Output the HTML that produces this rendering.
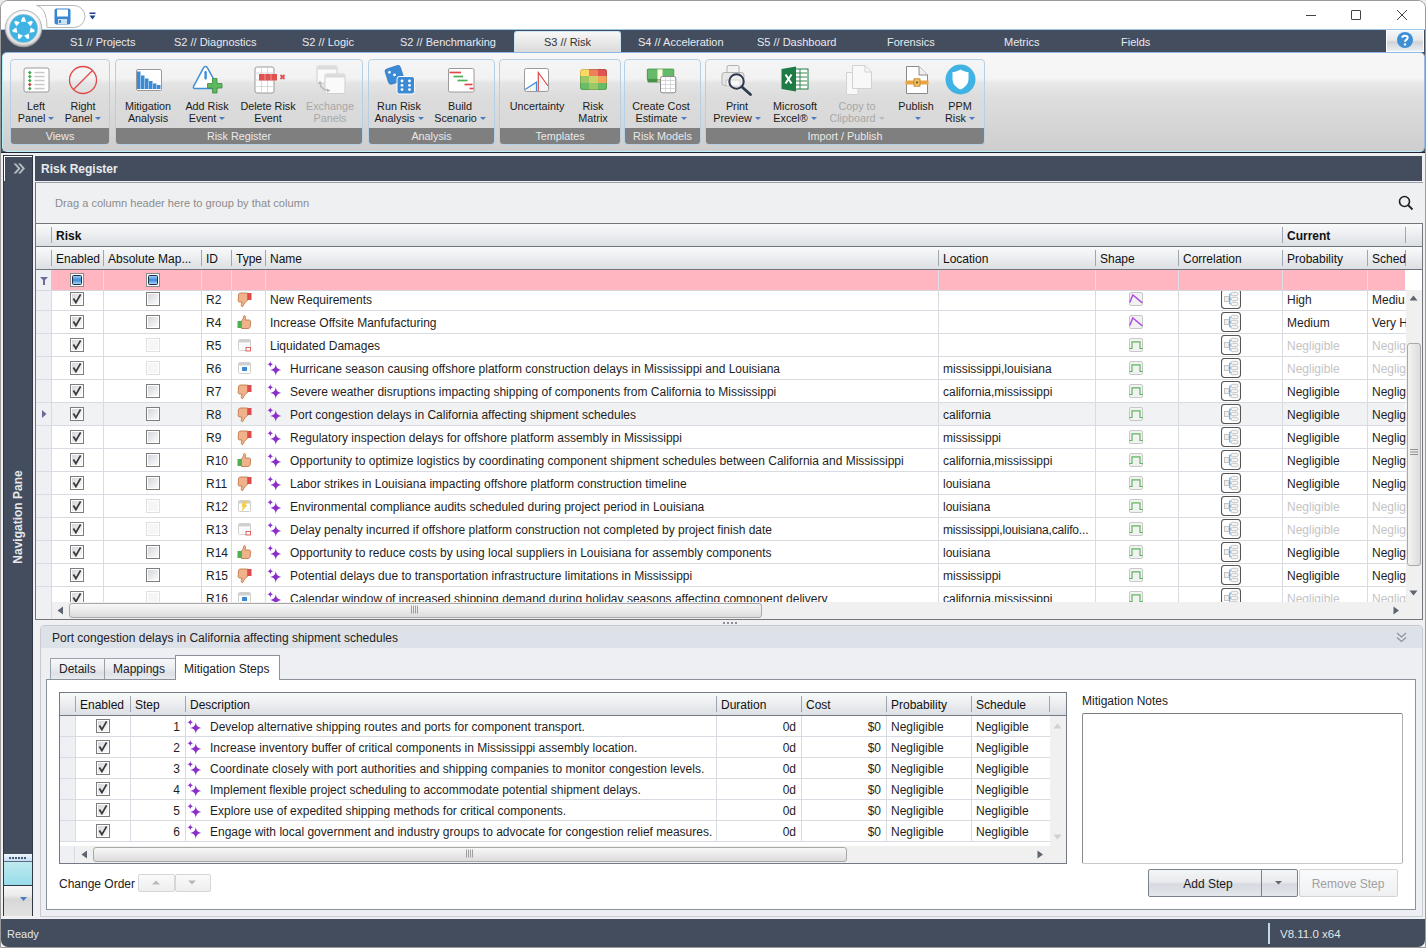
<!DOCTYPE html><html><head><meta charset="utf-8"><style>
html,body{margin:0;padding:0}
body{width:1426px;height:948px;position:relative;overflow:hidden;background:#e9eaee;font-family:"Liberation Sans", sans-serif;font-size:12px;color:#1e1e1e}
div,svg{box-sizing:border-box}
</style></head><body>
<div style="position:absolute;left:0px;top:0px;width:1426px;height:948px;background:#f0f0f2;border:1px solid #9a9a9a;border-radius:8px 8px 0 0"></div>
<div style="position:absolute;left:1px;top:1px;width:1424px;height:28px;background:#ffffff;border-radius:7px 7px 0 0"></div>
<svg style="position:absolute;left:34px;top:4px;" width="54" height="25" viewBox="0 0 54 25"><path d="M2.5 1.5 H40 A11 11 0 0 1 40 23.5 H13 C13 10 9 3 2.5 1.5 Z" fill="#fff" stroke="#b8b8b8" stroke-width="1"/></svg>
<svg style="position:absolute;left:54px;top:8px;" width="17" height="17" viewBox="0 0 17 17"><rect x="0.5" y="0.5" width="16" height="16" rx="2" fill="#3a87d0"/><rect x="3" y="1.5" width="11" height="7" fill="#fff"/><rect x="4" y="11" width="9" height="5" fill="#cfe2f5"/><rect x="5" y="12" width="2" height="3" fill="#3a87d0"/></svg>
<svg style="position:absolute;left:89px;top:12px;" width="8" height="9" viewBox="0 0 8 9"><rect x="0.5" y="0.5" width="6" height="1.5" fill="#1d3f8f"/><path d="M0.5 3.5 H6.5 L3.5 7.5 Z" fill="#1d3f8f"/></svg>
<div style="position:absolute;left:1306px;top:15px;width:10px;height:1px;background:#444"></div>
<div style="position:absolute;left:1351px;top:10px;width:10px;height:10px;border:1px solid #444;border-radius:1px"></div>
<svg style="position:absolute;left:1396px;top:9px;" width="12" height="12" viewBox="0 0 12 12"><path d="M1 1 L11 11 M11 1 L1 11" stroke="#444" stroke-width="1"/></svg>
<div style="position:absolute;left:1px;top:29px;width:1424px;height:23px;background:#434d5e;border-top:1px solid #9fc6e6"></div>
<div style="position:absolute;left:70px;top:35px;white-space:nowrap;font-size:11px;line-height:14px;color:#e8eaee">S1 // Projects</div>
<div style="position:absolute;left:174px;top:35px;white-space:nowrap;font-size:11px;line-height:14px;color:#e8eaee">S2 // Diagnostics</div>
<div style="position:absolute;left:302px;top:35px;white-space:nowrap;font-size:11px;line-height:14px;color:#e8eaee">S2 // Logic</div>
<div style="position:absolute;left:400px;top:35px;white-space:nowrap;font-size:11px;line-height:14px;color:#e8eaee">S2 // Benchmarking</div>
<div style="position:absolute;left:638px;top:35px;white-space:nowrap;font-size:11px;line-height:14px;color:#e8eaee">S4 // Acceleration</div>
<div style="position:absolute;left:757px;top:35px;white-space:nowrap;font-size:11px;line-height:14px;color:#e8eaee">S5 // Dashboard</div>
<div style="position:absolute;left:887px;top:35px;white-space:nowrap;font-size:11px;line-height:14px;color:#e8eaee">Forensics</div>
<div style="position:absolute;left:1004px;top:35px;white-space:nowrap;font-size:11px;line-height:14px;color:#e8eaee">Metrics</div>
<div style="position:absolute;left:1121px;top:35px;white-space:nowrap;font-size:11px;line-height:14px;color:#e8eaee">Fields</div>
<div style="position:absolute;left:514px;top:31px;width:107px;height:22px;background:linear-gradient(#f7f7f7,#d9d9d9);border:1px solid #c9e6f2;border-bottom:none;border-radius:3px 3px 0 0"></div>
<div style="position:absolute;left:544px;top:35px;white-space:nowrap;font-size:11px;line-height:14px;color:#333">S3 // Risk</div>
<div style="position:absolute;left:1386px;top:30px;width:38px;height:22px;background:linear-gradient(#f4f5f7 0%,#e7e9ec 45%,#cfd3d9 55%,#eceef0 100%);border:1px solid #fff"></div>
<svg style="position:absolute;left:1396px;top:31px;" width="18" height="18" viewBox="0 0 18 18"><circle cx="9" cy="9" r="8" fill="#3d8fd6"/><path d="M6.3 6.8 C6.3 4.2 11.7 4.2 11.7 6.8 C11.7 8.6 9 8.6 9 10.8" stroke="#fff" stroke-width="2" fill="none"/><circle cx="9" cy="13.4" r="1.2" fill="#fff"/></svg>
<svg style="position:absolute;left:3.5px;top:8.5px;" width="39" height="39" viewBox="0 0 39 39"><defs><radialGradient id="lg" cx="50%" cy="45%" r="55%"><stop offset="0.7" stop-color="#ffffff"/><stop offset="0.88" stop-color="#dcdcdc"/><stop offset="1" stop-color="#9c9c9c"/></radialGradient></defs>
<circle cx="19.5" cy="19.5" r="18.3" fill="url(#lg)" stroke="#a8a8a8" stroke-width="0.8"/>
<circle cx="19.5" cy="19.5" r="14.3" fill="#3fb3e3" stroke="#c8c8c8" stroke-width="0.6"/>
<g fill="#fff"><path d="M20.50 8.30 L22.20 12.70 L16.80 12.70 L18.50 8.30 Z"/><path d="M28.88 13.30 L26.50 17.37 L23.13 13.15 L27.63 11.74 Z"/><path d="M30.20 22.97 L25.53 23.65 L26.73 18.38 L30.64 21.02 Z"/><path d="M23.46 30.02 L20.02 26.80 L24.88 24.46 L25.26 29.16 Z"/><path d="M13.74 29.16 L14.12 24.46 L18.98 26.80 L15.54 30.02 Z"/><path d="M8.36 21.02 L12.27 18.38 L13.47 23.65 L8.80 22.97 Z"/><path d="M11.37 11.74 L15.87 13.15 L12.50 17.37 L10.12 13.30 Z"/></g></svg>
<div style="position:absolute;left:1px;top:52px;width:1424px;height:101px;background:#434d5e"></div>
<div style="position:absolute;left:1px;top:152px;width:1424px;height:1px;background:#1f2530"></div>
<div style="position:absolute;left:2px;top:52px;width:1423px;height:100px;background:linear-gradient(#f7f7f7 0%,#f5f5f5 26%,#e9e9e9 30%,#dedede 45%,#cecece 100%);border:1px solid #b6eef9;border-top-color:#8fb6e6;border-right-color:#9ab8e8;border-radius:5px"></div>
<div style="position:absolute;left:10px;top:59px;width:100px;height:86px;background:linear-gradient(#f5f5f5 0%,#f2f2f2 22%,#e4e4e4 28%,#dcdcdc 45%,#d6d6d6 100%);border:1px solid #b7cfe2;border-radius:4px"></div>
<div style="position:absolute;left:11px;top:128px;width:98px;height:16px;background:#7f7f7f;border-radius:0 0 3px 3px"></div>
<div style="position:absolute;left:10.0px;top:129px;width:100px;text-align:center;white-space:nowrap;font-size:10.8px;line-height:14px;color:#e9e9e9">Views</div>
<div style="position:absolute;left:115px;top:59px;width:248px;height:86px;background:linear-gradient(#f5f5f5 0%,#f2f2f2 22%,#e4e4e4 28%,#dcdcdc 45%,#d6d6d6 100%);border:1px solid #b7cfe2;border-radius:4px"></div>
<div style="position:absolute;left:116px;top:128px;width:246px;height:16px;background:#7f7f7f;border-radius:0 0 3px 3px"></div>
<div style="position:absolute;left:115.0px;top:129px;width:248px;text-align:center;white-space:nowrap;font-size:10.8px;line-height:14px;color:#e9e9e9">Risk Register</div>
<div style="position:absolute;left:368px;top:59px;width:127px;height:86px;background:linear-gradient(#f5f5f5 0%,#f2f2f2 22%,#e4e4e4 28%,#dcdcdc 45%,#d6d6d6 100%);border:1px solid #b7cfe2;border-radius:4px"></div>
<div style="position:absolute;left:369px;top:128px;width:125px;height:16px;background:#7f7f7f;border-radius:0 0 3px 3px"></div>
<div style="position:absolute;left:368.0px;top:129px;width:127px;text-align:center;white-space:nowrap;font-size:10.8px;line-height:14px;color:#e9e9e9">Analysis</div>
<div style="position:absolute;left:499px;top:59px;width:122px;height:86px;background:linear-gradient(#f5f5f5 0%,#f2f2f2 22%,#e4e4e4 28%,#dcdcdc 45%,#d6d6d6 100%);border:1px solid #b7cfe2;border-radius:4px"></div>
<div style="position:absolute;left:500px;top:128px;width:120px;height:16px;background:#7f7f7f;border-radius:0 0 3px 3px"></div>
<div style="position:absolute;left:499.0px;top:129px;width:122px;text-align:center;white-space:nowrap;font-size:10.8px;line-height:14px;color:#e9e9e9">Templates</div>
<div style="position:absolute;left:624px;top:59px;width:77px;height:86px;background:linear-gradient(#f5f5f5 0%,#f2f2f2 22%,#e4e4e4 28%,#dcdcdc 45%,#d6d6d6 100%);border:1px solid #b7cfe2;border-radius:4px"></div>
<div style="position:absolute;left:625px;top:128px;width:75px;height:16px;background:#7f7f7f;border-radius:0 0 3px 3px"></div>
<div style="position:absolute;left:624.0px;top:129px;width:77px;text-align:center;white-space:nowrap;font-size:10.8px;line-height:14px;color:#e9e9e9">Risk Models</div>
<div style="position:absolute;left:705px;top:59px;width:280px;height:86px;background:linear-gradient(#f5f5f5 0%,#f2f2f2 22%,#e4e4e4 28%,#dcdcdc 45%,#d6d6d6 100%);border:1px solid #b7cfe2;border-radius:4px"></div>
<div style="position:absolute;left:706px;top:128px;width:278px;height:16px;background:#7f7f7f;border-radius:0 0 3px 3px"></div>
<div style="position:absolute;left:705.0px;top:129px;width:280px;text-align:center;white-space:nowrap;font-size:10.8px;line-height:14px;color:#e9e9e9">Import / Publish</div>
<div style="position:absolute;left:-9.0px;top:99px;width:90px;text-align:center;white-space:nowrap;font-size:10.8px;line-height:14px;color:#1a1a1a">Left</div>
<div style="position:absolute;left:-9.0px;top:111px;width:90px;text-align:center;white-space:nowrap;font-size:10.8px;line-height:14px;color:#1a1a1a">Panel<span style="display:inline-block;width:0;height:0;border-left:3px solid transparent;border-right:3px solid transparent;border-top:3px solid #4a7ac0;vertical-align:middle;margin-left:3px;margin-bottom:1px"></span></div>
<div style="position:absolute;left:38.0px;top:99px;width:90px;text-align:center;white-space:nowrap;font-size:10.8px;line-height:14px;color:#1a1a1a">Right</div>
<div style="position:absolute;left:38.0px;top:111px;width:90px;text-align:center;white-space:nowrap;font-size:10.8px;line-height:14px;color:#1a1a1a">Panel<span style="display:inline-block;width:0;height:0;border-left:3px solid transparent;border-right:3px solid transparent;border-top:3px solid #4a7ac0;vertical-align:middle;margin-left:3px;margin-bottom:1px"></span></div>
<div style="position:absolute;left:103.0px;top:99px;width:90px;text-align:center;white-space:nowrap;font-size:10.8px;line-height:14px;color:#1a1a1a">Mitigation</div>
<div style="position:absolute;left:103.0px;top:111px;width:90px;text-align:center;white-space:nowrap;font-size:10.8px;line-height:14px;color:#1a1a1a">Analysis</div>
<div style="position:absolute;left:162.0px;top:99px;width:90px;text-align:center;white-space:nowrap;font-size:10.8px;line-height:14px;color:#1a1a1a">Add Risk</div>
<div style="position:absolute;left:162.0px;top:111px;width:90px;text-align:center;white-space:nowrap;font-size:10.8px;line-height:14px;color:#1a1a1a">Event<span style="display:inline-block;width:0;height:0;border-left:3px solid transparent;border-right:3px solid transparent;border-top:3px solid #4a7ac0;vertical-align:middle;margin-left:3px;margin-bottom:1px"></span></div>
<div style="position:absolute;left:223.0px;top:99px;width:90px;text-align:center;white-space:nowrap;font-size:10.8px;line-height:14px;color:#1a1a1a">Delete Risk</div>
<div style="position:absolute;left:223.0px;top:111px;width:90px;text-align:center;white-space:nowrap;font-size:10.8px;line-height:14px;color:#1a1a1a">Event</div>
<div style="position:absolute;left:354.0px;top:99px;width:90px;text-align:center;white-space:nowrap;font-size:10.8px;line-height:14px;color:#1a1a1a">Run Risk</div>
<div style="position:absolute;left:354.0px;top:111px;width:90px;text-align:center;white-space:nowrap;font-size:10.8px;line-height:14px;color:#1a1a1a">Analysis<span style="display:inline-block;width:0;height:0;border-left:3px solid transparent;border-right:3px solid transparent;border-top:3px solid #4a7ac0;vertical-align:middle;margin-left:3px;margin-bottom:1px"></span></div>
<div style="position:absolute;left:415.0px;top:99px;width:90px;text-align:center;white-space:nowrap;font-size:10.8px;line-height:14px;color:#1a1a1a">Build</div>
<div style="position:absolute;left:415.0px;top:111px;width:90px;text-align:center;white-space:nowrap;font-size:10.8px;line-height:14px;color:#1a1a1a">Scenario<span style="display:inline-block;width:0;height:0;border-left:3px solid transparent;border-right:3px solid transparent;border-top:3px solid #4a7ac0;vertical-align:middle;margin-left:3px;margin-bottom:1px"></span></div>
<div style="position:absolute;left:492.0px;top:99px;width:90px;text-align:center;white-space:nowrap;font-size:10.8px;line-height:14px;color:#1a1a1a">Uncertainty</div>
<div style="position:absolute;left:492.0px;top:111px;width:90px;text-align:center;white-space:nowrap;font-size:10.8px;line-height:14px;color:#1a1a1a"></div>
<div style="position:absolute;left:548.0px;top:99px;width:90px;text-align:center;white-space:nowrap;font-size:10.8px;line-height:14px;color:#1a1a1a">Risk</div>
<div style="position:absolute;left:548.0px;top:111px;width:90px;text-align:center;white-space:nowrap;font-size:10.8px;line-height:14px;color:#1a1a1a">Matrix</div>
<div style="position:absolute;left:616.0px;top:99px;width:90px;text-align:center;white-space:nowrap;font-size:10.8px;line-height:14px;color:#1a1a1a">Create Cost</div>
<div style="position:absolute;left:616.0px;top:111px;width:90px;text-align:center;white-space:nowrap;font-size:10.8px;line-height:14px;color:#1a1a1a">Estimate<span style="display:inline-block;width:0;height:0;border-left:3px solid transparent;border-right:3px solid transparent;border-top:3px solid #4a7ac0;vertical-align:middle;margin-left:3px;margin-bottom:1px"></span></div>
<div style="position:absolute;left:692.0px;top:99px;width:90px;text-align:center;white-space:nowrap;font-size:10.8px;line-height:14px;color:#1a1a1a">Print</div>
<div style="position:absolute;left:692.0px;top:111px;width:90px;text-align:center;white-space:nowrap;font-size:10.8px;line-height:14px;color:#1a1a1a">Preview<span style="display:inline-block;width:0;height:0;border-left:3px solid transparent;border-right:3px solid transparent;border-top:3px solid #4a7ac0;vertical-align:middle;margin-left:3px;margin-bottom:1px"></span></div>
<div style="position:absolute;left:750.0px;top:99px;width:90px;text-align:center;white-space:nowrap;font-size:10.8px;line-height:14px;color:#1a1a1a">Microsoft</div>
<div style="position:absolute;left:750.0px;top:111px;width:90px;text-align:center;white-space:nowrap;font-size:10.8px;line-height:14px;color:#1a1a1a">Excel®<span style="display:inline-block;width:0;height:0;border-left:3px solid transparent;border-right:3px solid transparent;border-top:3px solid #4a7ac0;vertical-align:middle;margin-left:3px;margin-bottom:1px"></span></div>
<div style="position:absolute;left:871.0px;top:99px;width:90px;text-align:center;white-space:nowrap;font-size:10.8px;line-height:14px;color:#1a1a1a">Publish</div>
<div style="position:absolute;left:871.0px;top:111px;width:90px;text-align:center;white-space:nowrap;font-size:10.8px;line-height:14px;color:#1a1a1a"><span style="display:inline-block;width:0;height:0;border-left:3px solid transparent;border-right:3px solid transparent;border-top:3px solid #4a7ac0;vertical-align:middle;margin-left:3px;margin-bottom:1px"></span></div>
<div style="position:absolute;left:915.0px;top:99px;width:90px;text-align:center;white-space:nowrap;font-size:10.8px;line-height:14px;color:#1a1a1a">PPM</div>
<div style="position:absolute;left:915.0px;top:111px;width:90px;text-align:center;white-space:nowrap;font-size:10.8px;line-height:14px;color:#1a1a1a">Risk<span style="display:inline-block;width:0;height:0;border-left:3px solid transparent;border-right:3px solid transparent;border-top:3px solid #4a7ac0;vertical-align:middle;margin-left:3px;margin-bottom:1px"></span></div>
<div style="position:absolute;left:285.0px;top:99px;width:90px;text-align:center;white-space:nowrap;font-size:10.8px;line-height:14px;color:#a8a8a8">Exchange</div>
<div style="position:absolute;left:285.0px;top:111px;width:90px;text-align:center;white-space:nowrap;font-size:10.8px;line-height:14px;color:#a8a8a8">Panels</div>
<div style="position:absolute;left:812.0px;top:99px;width:90px;text-align:center;white-space:nowrap;font-size:10.8px;line-height:14px;color:#a8a8a8">Copy to</div>
<div style="position:absolute;left:812.0px;top:111px;width:90px;text-align:center;white-space:nowrap;font-size:10.8px;line-height:14px;color:#a8a8a8">Clipboard<span style="display:inline-block;width:0;height:0;border-left:3px solid transparent;border-right:3px solid transparent;border-top:3px solid #bbb;vertical-align:middle;margin-left:3px;margin-bottom:1px"></span></div>
<svg style="position:absolute;left:22.5px;top:66.5px;" width="28" height="26" viewBox="0 0 28 26"><rect x="1" y="1" width="25" height="24" rx="2" fill="#fff" stroke="#9a9a9a"/><rect x="5.5" y="4.3" width="2.6" height="2.6" transform="rotate(45 6.8 5.6)" fill="#3aa84a"/><rect x="11.5" y="4.8" width="10" height="1.5" fill="#c8c8c8"/><rect x="5.5" y="8.3" width="2.6" height="2.6" transform="rotate(45 6.8 9.6)" fill="#3aa84a"/><rect x="11.5" y="8.8" width="10" height="1.5" fill="#c8c8c8"/><rect x="5.5" y="12.3" width="2.6" height="2.6" transform="rotate(45 6.8 13.6)" fill="#3aa84a"/><rect x="11.5" y="12.8" width="10" height="1.5" fill="#c8c8c8"/><rect x="5.5" y="16.3" width="2.6" height="2.6" transform="rotate(45 6.8 17.6)" fill="#c94040"/><rect x="11.5" y="16.8" width="10" height="1.5" fill="#c8c8c8"/><rect x="5.5" y="20.3" width="2.6" height="2.6" transform="rotate(45 6.8 21.6)" fill="#3aa84a"/><rect x="11.5" y="20.8" width="10" height="1.5" fill="#c8c8c8"/></svg>
<svg style="position:absolute;left:68px;top:65px;" width="30" height="30" viewBox="0 0 30 30"><circle cx="15" cy="15" r="13.5" fill="none" stroke="#e04848" stroke-width="1.3"/><path d="M5.5 24.5 L24.5 5.5" stroke="#e04848" stroke-width="1.3"/></svg>
<svg style="position:absolute;left:135.5px;top:68.5px;" width="26" height="22" viewBox="0 0 26 22"><rect x="0.5" y="0.5" width="25" height="21" rx="1.5" fill="#fff" stroke="#9a9a9a"/><rect x="1" y="2.5" width="3.5" height="17.5" fill="#3b8ad6"/><rect x="5" y="6.5" width="3.5" height="13.5" fill="#3b8ad6"/><rect x="9" y="9.5" width="3.5" height="10.5" fill="#3b8ad6"/><rect x="13" y="12" width="3.5" height="8" fill="#3b8ad6"/><rect x="17" y="14.5" width="3.5" height="5.5" fill="#3b8ad6"/><rect x="21" y="16" width="3.5" height="4" fill="#3b8ad6"/><rect x="1" y="20" width="24" height="1" fill="#fff"/></svg>
<svg style="position:absolute;left:192px;top:64px;" width="34" height="32" viewBox="0 0 34 32"><path d="M13.5 2.5 Q14.8 2.5 15.5 3.8 L25.5 22.5 Q26 24.5 24 24.5 H3 Q1 24.5 1.5 22.5 L11.5 3.8 Q12.2 2.5 13.5 2.5 Z" fill="#fff" stroke="#3d8fd6" stroke-width="1.5"/><rect x="12.4" y="7" width="2.4" height="8.5" rx="1.2" fill="#3d8fd6"/><path d="M20.5 14.5 H25 V19.5 H30 V24 H25 V29 H20.5 V24 H15.5 V19.5 H20.5 Z" fill="#5cb85c" stroke="#3c8a3c" stroke-width="0.8"/></svg>
<svg style="position:absolute;left:254px;top:66px;" width="34" height="28" viewBox="0 0 34 28"><rect x="1" y="1" width="19" height="26" rx="2" fill="#fff" stroke="#9a9a9a"/><g stroke="#d0d0d0" stroke-width="0.8"><path d="M1 7H20M1 14H20M1 20.5H20M7.5 1V27M13.5 1V27"/></g><rect x="5" y="8" width="18" height="6.5" fill="#e05252"/><g stroke="#f4a8a8" stroke-width="0.8"><path d="M11 8V14.5M17 8V14.5"/></g><path d="M26.5 9 L30.5 13 M30.5 9 L26.5 13" stroke="#e05252" stroke-width="1.8"/></svg>
<svg style="position:absolute;left:316px;top:65px;" width="31" height="30" viewBox="0 0 31 30"><rect x="1" y="1" width="20" height="17" rx="1.5" fill="#fafafa" stroke="#cfcfcf"/><rect x="1.5" y="1.5" width="19" height="3" fill="#dadada"/><rect x="9" y="9" width="20" height="19.5" rx="1.5" fill="#fafafa" stroke="#cfcfcf"/><rect x="9.5" y="9.5" width="19" height="3" fill="#dadada"/><path d="M4 17 C4 22 7 25 12 25.5" stroke="#b8b8b8" fill="none" stroke-width="1.4"/><path d="M2 19 L4 15.5 L6 19 Z M11 23.5 L14.5 25.5 L11 27.5 Z" fill="#b8b8b8"/></svg>
<svg style="position:absolute;left:384px;top:64px;" width="34" height="32" viewBox="0 0 34 32"><g transform="rotate(-18 10 11)"><rect x="2.5" y="3" width="16" height="16" rx="2.5" fill="#3b8ad6" stroke="#2a6fb8" stroke-width="0.6"/><circle cx="6.5" cy="7" r="1.4" fill="#fff"/><circle cx="10.5" cy="11" r="1.4" fill="#fff"/><circle cx="14.5" cy="15" r="1.4" fill="#fff"/></g><rect x="13" y="12.5" width="17.5" height="17.5" rx="2.5" fill="#3b8ad6" stroke="#fff" stroke-width="1"/><g fill="#fff"><circle cx="18" cy="17" r="1.4"/><circle cx="25.5" cy="17" r="1.4"/><circle cx="18" cy="21.3" r="1.4"/><circle cx="25.5" cy="21.3" r="1.4"/><circle cx="18" cy="25.6" r="1.4"/><circle cx="25.5" cy="25.6" r="1.4"/></g></svg>
<svg style="position:absolute;left:447.5px;top:67.5px;" width="27" height="25" viewBox="0 0 27 25"><rect x="0.5" y="0.5" width="25.5" height="23.5" rx="1.5" fill="#fff" stroke="#9a9a9a"/><path d="M1.5 4.5 H13" stroke="#e04848" stroke-width="1.7"/><path d="M5.5 8.5 H15" stroke="#4cb050" stroke-width="1.7"/><path d="M9.5 12.5 H19.5" stroke="#4cb050" stroke-width="1.7"/><path d="M16.5 16.5 H24.5" stroke="#e04848" stroke-width="1.7"/><path d="M21.5 20.5 H25.5" stroke="#e04848" stroke-width="1.7"/></svg>
<svg style="position:absolute;left:524px;top:68px;" width="25" height="24" viewBox="0 0 25 24"><rect x="0.5" y="0.5" width="24" height="23" rx="1.8" fill="#fff" stroke="#9a9a9a"/><g stroke="#d8d8d8" stroke-width="0.6"><path d="M4 23V20M6.5 23V19M9 23V17.5M11 23V16.5M14.8 23V7M16.8 23V10M18.8 23V13M20.8 23V16M22.8 23V19"/></g><path d="M1 21.5 L12.5 14.2 V23" stroke="#3d8fd6" stroke-width="1.2" fill="none"/><path d="M14.3 23 V4.5 L24 18" stroke="#e04848" stroke-width="1.2" fill="none"/></svg>
<svg style="position:absolute;left:580px;top:69px;" width="27" height="21" viewBox="0 0 27 21"><defs><clipPath id="rm"><rect x="0" y="0" width="27" height="21" rx="2.5"/></clipPath></defs><g clip-path="url(#rm)"><rect x="0" y="0" width="9" height="7" fill="#fdd862"/><rect x="9" y="0" width="9" height="7" fill="#ec8059"/><rect x="18" y="0" width="9" height="7" fill="#e05454"/><rect x="0" y="7" width="9" height="7" fill="#9bc767"/><rect x="9" y="7" width="9" height="7" fill="#cdd467"/><rect x="18" y="7" width="9" height="7" fill="#f3a65a"/><rect x="0" y="14" width="9" height="7" fill="#68bd66"/><rect x="9" y="14" width="9" height="7" fill="#9bc767"/><rect x="18" y="14" width="9" height="7" fill="#66bd66"/></g><rect x="0.5" y="0.5" width="26" height="20" rx="2.5" fill="none" stroke="rgba(0,0,0,0.15)"/></svg>
<svg style="position:absolute;left:646px;top:68px;" width="32" height="27" viewBox="0 0 32 27"><path d="M1.5 1 H27 L27.8 11 V14.5 H1.8 L1 11 Z" fill="#4a8f4a"/><rect x="1.3" y="1" width="26.5" height="10.3" rx="0.8" fill="#66bb6a" stroke="#3f8f3f" stroke-width="0.7"/><rect x="11.5" y="1.4" width="5" height="9.6" fill="#fffde2"/><rect x="11.5" y="11.3" width="5" height="3.2" fill="#cdc8a8"/><rect x="14.5" y="8.5" width="15.3" height="16.3" rx="2" fill="#fff" stroke="#8a8a8a" stroke-width="1"/><g stroke="#cfcfcf" stroke-width="0.8"><path d="M15 12.5H29.5M15 16.5H29.5M15 20.5H29.5M19.5 9V24.5M24.5 9V24.5"/></g></svg>
<svg style="position:absolute;left:720px;top:64px;" width="34" height="34" viewBox="0 0 34 34"><rect x="7" y="1.5" width="12" height="10" rx="1.5" fill="#f2f2f2" stroke="#b0b0b0"/><rect x="2" y="8.5" width="22" height="13" rx="2.5" fill="#e6e6e6" stroke="#b0b0b0"/><rect x="6" y="16" width="14" height="6" fill="#f4f4f4" stroke="#b8b8b8" stroke-width="0.8"/><circle cx="16.5" cy="17.5" r="7.2" fill="rgba(255,255,255,0.35)" stroke="#2c3a4e" stroke-width="2"/><path d="M22 23 L30.5 30.5" stroke="#2c3a4e" stroke-width="2.8" stroke-linecap="round"/></svg>
<svg style="position:absolute;left:781px;top:66px;" width="28" height="26" viewBox="0 0 28 26"><rect x="10" y="3" width="17" height="20" fill="#fff" stroke="#1f7a3e" stroke-width="1"/><g stroke="#1f7a3e" stroke-width="0.9"><path d="M13 7H26M13 11H26M13 15H26M13 19H26M19 3V23"/></g><path d="M0.5 3 L15 0.5 V25.5 L0.5 23 Z" fill="#1e7b45"/><path d="M4.5 8.5 L10.5 17.5 M10.5 8.5 L4.5 17.5" stroke="#fff" stroke-width="2"/></svg>
<svg style="position:absolute;left:844px;top:64px;" width="30" height="32" viewBox="0 0 30 32"><path d="M2.5 8.5 H14 V30.5 H2.5 Z" fill="#f8f8f8" stroke="#d2d2d2" stroke-linejoin="round"/><path d="M8.5 1.5 H21 L27.5 8 V24.5 H8.5 Z" fill="#f8f8f8" stroke="#d2d2d2" stroke-linejoin="round"/><path d="M21 1.5 V8 H27.5" fill="none" stroke="#d2d2d2"/></svg>
<svg style="position:absolute;left:905px;top:65px;" width="26" height="30" viewBox="0 0 26 30"><path d="M1.5 1.5 H14 L22.5 10 V28.5 H1.5 Z" fill="#fff" stroke="#8a8a8a" stroke-linejoin="round"/><path d="M14 1.5 V10 H22.5" fill="#f0f0f0" stroke="#8a8a8a"/><rect x="0.5" y="15.5" width="23" height="4" fill="#e6a540"/><rect x="9" y="13.8" width="6" height="7.4" fill="#f0c060" stroke="#b8802a" stroke-width="0.8"/><circle cx="12" cy="17.5" r="0.9" fill="#503010"/></svg>
<svg style="position:absolute;left:945px;top:64px;" width="31" height="31" viewBox="0 0 31 31"><circle cx="15.5" cy="15.5" r="15" fill="#3fb3e3"/><path d="M15.5 5.5 C19 7.5 21.5 8 23.5 8 V15 C23.5 20 20 23.5 15.5 25.5 C11 23.5 7.5 20 7.5 15 V8 C9.5 8 12 7.5 15.5 5.5 Z" fill="#fff"/></svg>
<div style="position:absolute;left:3px;top:155px;width:30px;height:761px;background:#434d5e;border:1px solid #2f3744"></div>
<div style="position:absolute;left:4px;top:156px;width:28px;height:1px;background:#fff"></div>
<div style="position:absolute;left:4px;top:156px;width:1px;height:25px;background:#fff"></div>
<svg style="position:absolute;left:13px;top:163px;" width="13" height="11" viewBox="0 0 13 11"><path d="M0.5 0.5 L5 5.5 L0.5 10.5 L3 10.5 L7.5 5.5 L3 0.5 Z M5 0.5 L9.5 5.5 L5 10.5 L7.5 10.5 L12 5.5 L7.5 0.5 Z" fill="#b9bec6"/></svg>
<div style="position:absolute;left:-32px;top:509px;width:100px;height:16px;transform:rotate(-90deg);text-align:center;color:#e6e8ec;font-weight:bold;font-size:12px;line-height:16px;white-space:nowrap">Navigation Pane</div>
<div style="position:absolute;left:4px;top:854px;width:28px;height:8px;background:linear-gradient(#eef5fd,#c6dcf4);border-bottom:1px solid #5a6a80"></div>
<div style="position:absolute;left:9px;top:857px;width:2px;height:2px;background:#4a5a70"></div>
<div style="position:absolute;left:12px;top:857px;width:2px;height:2px;background:#4a5a70"></div>
<div style="position:absolute;left:15px;top:857px;width:2px;height:2px;background:#4a5a70"></div>
<div style="position:absolute;left:18px;top:857px;width:2px;height:2px;background:#4a5a70"></div>
<div style="position:absolute;left:21px;top:857px;width:2px;height:2px;background:#4a5a70"></div>
<div style="position:absolute;left:24px;top:857px;width:2px;height:2px;background:#4a5a70"></div>
<div style="position:absolute;left:4px;top:862px;width:28px;height:24px;background:linear-gradient(#bfeaf0,#98dcea);border-bottom:1px solid #2f3744"></div>
<div style="position:absolute;left:4px;top:886px;width:28px;height:30px;background:linear-gradient(#f7f7f7 0%,#ececec 30%,#d7d7d7 45%,#e2e2e2 100%)"></div>
<svg style="position:absolute;left:20px;top:897px;" width="7" height="5" viewBox="0 0 7 5"><path d="M0 0 H7 L3.5 4 Z" fill="#4a7ac0"/></svg>
<div style="position:absolute;left:35px;top:156px;width:1387px;height:25px;background:#434d5e"></div>
<div style="position:absolute;left:41px;top:162px;white-space:nowrap;font-size:12px;line-height:14px;color:#e8eaee;font-weight:bold">Risk Register</div>
<div style="position:absolute;left:35px;top:182px;width:1388px;height:42px;background:#eff0f2;border-top:1px solid #9aa0a8;border-left:1px solid #72757b"></div>
<div style="position:absolute;left:55px;top:196px;white-space:nowrap;font-size:11.1px;line-height:14px;color:#8c8c8c">Drag a column header here to group by that column</div>
<svg style="position:absolute;left:1398px;top:195px;" width="16" height="16" viewBox="0 0 16 16"><circle cx="6.5" cy="6.5" r="5" fill="none" stroke="#222" stroke-width="1.6"/><path d="M10 10 L14.5 14.5" stroke="#222" stroke-width="1.8"/></svg>
<div style="position:absolute;left:35px;top:223px;width:1388px;height:397px;background:#fff;border:1px solid #72757b"></div>
<div style="position:absolute;left:36px;top:224px;width:1386px;height:22px;background:linear-gradient(#f9fafa 0%,#eef0f2 40%,#dcdfe3 100%)"></div>
<div style="position:absolute;left:36px;top:246px;width:1386px;height:1px;background:#72757b"></div>
<div style="position:absolute;left:36px;top:247px;width:1386px;height:22px;background:linear-gradient(#f9fafa 0%,#eef0f2 40%,#dcdfe3 100%)"></div>
<div style="position:absolute;left:36px;top:269px;width:1386px;height:1px;background:#72757b"></div>
<div style="position:absolute;left:51px;top:227px;width:1px;height:16px;background:#9ea6b2"></div>
<div style="position:absolute;left:56px;top:229px;white-space:nowrap;font-size:12px;line-height:14px;font-weight:bold;color:#111">Risk</div>
<div style="position:absolute;left:1282px;top:227px;width:1px;height:16px;background:#9ea6b2"></div>
<div style="position:absolute;left:1287px;top:229px;white-space:nowrap;font-size:12px;line-height:14px;font-weight:bold;color:#111">Current</div>
<div style="position:absolute;left:1405px;top:227px;width:1px;height:16px;background:#9ea6b2"></div>
<div style="position:absolute;left:51px;top:250px;width:1px;height:16px;background:#9ea6b2"></div>
<div style="position:absolute;left:103px;top:250px;width:1px;height:16px;background:#9ea6b2"></div>
<div style="position:absolute;left:201px;top:250px;width:1px;height:16px;background:#9ea6b2"></div>
<div style="position:absolute;left:231px;top:250px;width:1px;height:16px;background:#9ea6b2"></div>
<div style="position:absolute;left:265px;top:250px;width:1px;height:16px;background:#9ea6b2"></div>
<div style="position:absolute;left:938px;top:250px;width:1px;height:16px;background:#9ea6b2"></div>
<div style="position:absolute;left:1095px;top:250px;width:1px;height:16px;background:#9ea6b2"></div>
<div style="position:absolute;left:1178px;top:250px;width:1px;height:16px;background:#9ea6b2"></div>
<div style="position:absolute;left:1282px;top:250px;width:1px;height:16px;background:#9ea6b2"></div>
<div style="position:absolute;left:1367px;top:250px;width:1px;height:16px;background:#9ea6b2"></div>
<div style="position:absolute;left:1405px;top:250px;width:1px;height:16px;background:#9ea6b2"></div>
<div style="position:absolute;left:56px;top:252px;white-space:nowrap;font-size:12px;line-height:14px;color:#111">Enabled</div>
<div style="position:absolute;left:108px;top:252px;white-space:nowrap;font-size:12px;line-height:14px;color:#111">Absolute Map...</div>
<div style="position:absolute;left:206px;top:252px;white-space:nowrap;font-size:12px;line-height:14px;color:#111">ID</div>
<div style="position:absolute;left:236px;top:252px;white-space:nowrap;font-size:12px;line-height:14px;color:#111">Type</div>
<div style="position:absolute;left:270px;top:252px;white-space:nowrap;font-size:12px;line-height:14px;color:#111">Name</div>
<div style="position:absolute;left:943px;top:252px;white-space:nowrap;font-size:12px;line-height:14px;color:#111">Location</div>
<div style="position:absolute;left:1100px;top:252px;white-space:nowrap;font-size:12px;line-height:14px;color:#111">Shape</div>
<div style="position:absolute;left:1183px;top:252px;white-space:nowrap;font-size:12px;line-height:14px;color:#111">Correlation</div>
<div style="position:absolute;left:1287px;top:252px;white-space:nowrap;font-size:12px;line-height:14px;color:#111">Probability</div>
<div style="position:absolute;left:1372px;top:252px;white-space:nowrap;font-size:12px;line-height:14px;color:#111">Sched</div>
<div style="position:absolute;left:36px;top:270px;width:15px;height:20px;background:#eff0f3"></div>
<div style="position:absolute;left:51px;top:270px;width:1354px;height:20px;background:#ffb6c1"></div>
<svg style="position:absolute;left:40px;top:277px;" width="8" height="8" viewBox="0 0 8 8"><path d="M0 0 H8 L5 3 V8 H3 V3 Z" fill="#6c6c9c"/></svg>
<svg style="position:absolute;left:70px;top:273px;" width="14" height="14" viewBox="0 0 14 14"><rect x="0.5" y="0.5" width="13" height="13" fill="#fff" stroke="#8a8a8a"/><defs><linearGradient id="fb" x1="0" y1="0" x2="0" y2="1"><stop offset="0" stop-color="#a9d2f5"/><stop offset="0.5" stop-color="#3b8ad6"/><stop offset="1" stop-color="#b8dcf8"/></linearGradient></defs><rect x="2.5" y="2.5" width="9" height="9" rx="1" fill="url(#fb)" stroke="#1d2f4a"/></svg>
<svg style="position:absolute;left:146px;top:273px;" width="14" height="14" viewBox="0 0 14 14"><rect x="0.5" y="0.5" width="13" height="13" fill="#fff" stroke="#8a8a8a"/><defs><linearGradient id="fb" x1="0" y1="0" x2="0" y2="1"><stop offset="0" stop-color="#a9d2f5"/><stop offset="0.5" stop-color="#3b8ad6"/><stop offset="1" stop-color="#b8dcf8"/></linearGradient></defs><rect x="2.5" y="2.5" width="9" height="9" rx="1" fill="url(#fb)" stroke="#1d2f4a"/></svg>
<div style="position:absolute;left:103px;top:270px;width:1px;height:20px;background:#dcdfe5"></div>
<div style="position:absolute;left:201px;top:270px;width:1px;height:20px;background:#dcdfe5"></div>
<div style="position:absolute;left:231px;top:270px;width:1px;height:20px;background:#dcdfe5"></div>
<div style="position:absolute;left:265px;top:270px;width:1px;height:20px;background:#dcdfe5"></div>
<div style="position:absolute;left:938px;top:270px;width:1px;height:20px;background:#dcdfe5"></div>
<div style="position:absolute;left:1095px;top:270px;width:1px;height:20px;background:#dcdfe5"></div>
<div style="position:absolute;left:1178px;top:270px;width:1px;height:20px;background:#dcdfe5"></div>
<div style="position:absolute;left:1282px;top:270px;width:1px;height:20px;background:#dcdfe5"></div>
<div style="position:absolute;left:1367px;top:270px;width:1px;height:20px;background:#dcdfe5"></div>
<div style="position:absolute;left:36px;top:290px;width:1370px;height:1px;background:#d5d8de"></div>
<div style="position:absolute;left:36px;top:291px;width:1370px;height:311px;overflow:hidden">
<div style="position:absolute;left:0px;top:-3px;width:15px;height:23px;background:#eff0f3"></div>
<div style="position:absolute;left:15px;top:-3px;width:1354px;height:22px;background:#fff"></div>
<div style="position:absolute;left:0px;top:19px;width:1370px;height:1px;background:#d8dbe1"></div>
<div style="position:absolute;left:15px;top:-3px;width:1px;height:23px;background:#d8dbe1"></div>
<div style="position:absolute;left:67px;top:-3px;width:1px;height:23px;background:#d8dbe1"></div>
<div style="position:absolute;left:165px;top:-3px;width:1px;height:23px;background:#d8dbe1"></div>
<div style="position:absolute;left:195px;top:-3px;width:1px;height:23px;background:#d8dbe1"></div>
<div style="position:absolute;left:229px;top:-3px;width:1px;height:23px;background:#d8dbe1"></div>
<div style="position:absolute;left:902px;top:-3px;width:1px;height:23px;background:#d8dbe1"></div>
<div style="position:absolute;left:1059px;top:-3px;width:1px;height:23px;background:#d8dbe1"></div>
<div style="position:absolute;left:1142px;top:-3px;width:1px;height:23px;background:#d8dbe1"></div>
<div style="position:absolute;left:1246px;top:-3px;width:1px;height:23px;background:#d8dbe1"></div>
<div style="position:absolute;left:1331px;top:-3px;width:1px;height:23px;background:#d8dbe1"></div>
<svg style="position:absolute;left:34px;top:1px;" width="14" height="14" viewBox="0 0 14 14"><defs><linearGradient id="cg" x1="0" y1="0" x2="1" y2="1"><stop offset="0" stop-color="#d4d7dc"/><stop offset="1" stop-color="#fbfbfb"/></linearGradient></defs><rect x="0.5" y="0.5" width="13" height="13" fill="#fff" stroke="#7d7d7d"/><rect x="2" y="2" width="10" height="10" fill="url(#cg)"/><path d="M3.4 6.6 L5.9 10.6 L10.6 2.4" stroke="#3a3a3a" stroke-width="1.8" fill="none"/></svg>
<svg style="position:absolute;left:110px;top:1px;" width="14" height="14" viewBox="0 0 14 14"><defs><linearGradient id="ug" x1="0" y1="0" x2="1" y2="1"><stop offset="0" stop-color="#d4d7dc"/><stop offset="1" stop-color="#fbfbfb"/></linearGradient></defs><rect x="0.5" y="0.5" width="13" height="13" fill="#fff" stroke="#7d7d7d"/><rect x="2" y="2" width="10" height="10" fill="url(#ug)"/></svg>
<div style="position:absolute;left:170px;top:2px;white-space:nowrap;font-size:12px;line-height:14px;">R2</div>
<svg style="position:absolute;left:201px;top:1px;" width="16" height="16" viewBox="0 0 16 16"><path d="M1.5 3 C1.5 1.5 2.5 1 4 1 H10.5 V8.5 C9 9.5 8 10.5 7 12 C6.3 13 6.5 14 5.8 14.5 C4.8 15 4 14 4.3 12.5 L5 10 H2.8 C1.8 10 1 9.3 1.2 8.2 Z" fill="#efb28a" stroke="#c27a4c" stroke-width="0.9"/><rect x="10.5" y="1" width="4" height="7" fill="#e04a4a"/></svg>
<div style="position:absolute;left:234px;top:2px;white-space:nowrap;font-size:12px;line-height:14px;">New Requirements</div>
<div style="position:absolute;left:907px;top:2px;white-space:nowrap;font-size:12px;line-height:14px;"></div>
<svg style="position:absolute;left:1093px;top:1px;" width="14" height="14" viewBox="0 0 14 14"><rect x="0.5" y="0.5" width="13" height="13" rx="1.5" fill="#f2f2f2" stroke="#c8c8c8"/><path d="M0.8 10.5 L3.8 3 L13.3 10.8" stroke="#b04ee0" stroke-width="1.5" fill="none"/></svg>
<svg style="position:absolute;left:1185px;top:-2px;" width="20" height="20" viewBox="0 0 20 20"><rect x="0.5" y="0.5" width="19" height="19" rx="3" fill="#fff" stroke="#555" stroke-width="1.1"/><rect x="3.5" y="7.5" width="4.5" height="5" fill="#f0f0f0" stroke="#c0c0c0" stroke-width="0.9"/><path d="M10.5 5 H8.8 V15 H10.5 M8 10 H10.5" stroke="#3d8fd6" fill="none" stroke-width="0.9"/><rect x="10" y="3.3" width="7" height="3.4" rx="1.5" fill="#f4f4f4" stroke="#c0c0c0" stroke-width="0.9"/><rect x="10" y="8.3" width="7" height="3.4" rx="1.5" fill="#f4f4f4" stroke="#c0c0c0" stroke-width="0.9"/><rect x="10" y="13.3" width="7" height="3.4" rx="1.5" fill="#f4f4f4" stroke="#c0c0c0" stroke-width="0.9"/></svg>
<div style="position:absolute;left:1251px;top:2px;white-space:nowrap;font-size:12px;line-height:14px;">High</div>
<div style="position:absolute;left:1336px;top:2px;white-space:nowrap;font-size:12px;line-height:14px;">Mediu</div>
<div style="position:absolute;left:0px;top:20px;width:15px;height:23px;background:#eff0f3"></div>
<div style="position:absolute;left:15px;top:20px;width:1354px;height:22px;background:#fff"></div>
<div style="position:absolute;left:0px;top:42px;width:1370px;height:1px;background:#d8dbe1"></div>
<div style="position:absolute;left:15px;top:20px;width:1px;height:23px;background:#d8dbe1"></div>
<div style="position:absolute;left:67px;top:20px;width:1px;height:23px;background:#d8dbe1"></div>
<div style="position:absolute;left:165px;top:20px;width:1px;height:23px;background:#d8dbe1"></div>
<div style="position:absolute;left:195px;top:20px;width:1px;height:23px;background:#d8dbe1"></div>
<div style="position:absolute;left:229px;top:20px;width:1px;height:23px;background:#d8dbe1"></div>
<div style="position:absolute;left:902px;top:20px;width:1px;height:23px;background:#d8dbe1"></div>
<div style="position:absolute;left:1059px;top:20px;width:1px;height:23px;background:#d8dbe1"></div>
<div style="position:absolute;left:1142px;top:20px;width:1px;height:23px;background:#d8dbe1"></div>
<div style="position:absolute;left:1246px;top:20px;width:1px;height:23px;background:#d8dbe1"></div>
<div style="position:absolute;left:1331px;top:20px;width:1px;height:23px;background:#d8dbe1"></div>
<svg style="position:absolute;left:34px;top:24px;" width="14" height="14" viewBox="0 0 14 14"><defs><linearGradient id="cg" x1="0" y1="0" x2="1" y2="1"><stop offset="0" stop-color="#d4d7dc"/><stop offset="1" stop-color="#fbfbfb"/></linearGradient></defs><rect x="0.5" y="0.5" width="13" height="13" fill="#fff" stroke="#7d7d7d"/><rect x="2" y="2" width="10" height="10" fill="url(#cg)"/><path d="M3.4 6.6 L5.9 10.6 L10.6 2.4" stroke="#3a3a3a" stroke-width="1.8" fill="none"/></svg>
<svg style="position:absolute;left:110px;top:24px;" width="14" height="14" viewBox="0 0 14 14"><defs><linearGradient id="ug" x1="0" y1="0" x2="1" y2="1"><stop offset="0" stop-color="#d4d7dc"/><stop offset="1" stop-color="#fbfbfb"/></linearGradient></defs><rect x="0.5" y="0.5" width="13" height="13" fill="#fff" stroke="#7d7d7d"/><rect x="2" y="2" width="10" height="10" fill="url(#ug)"/></svg>
<div style="position:absolute;left:170px;top:25px;white-space:nowrap;font-size:12px;line-height:14px;">R4</div>
<svg style="position:absolute;left:201px;top:24px;" width="16" height="16" viewBox="0 0 16 16"><path d="M4.5 6 C5.5 5 6.5 3.5 6.5 1.8 C6.5 0.8 7.3 0.3 8 0.8 C8.8 1.5 8.6 3 8.2 5 H12 C13 5 13.8 5.8 13.6 6.8 L13.2 11.5 C13 12.8 12.2 13.5 11 13.5 H4.5 Z" fill="#efb28a" stroke="#c27a4c" stroke-width="0.9"/><rect x="0.5" y="6" width="4" height="7" fill="#4cb050"/></svg>
<div style="position:absolute;left:234px;top:25px;white-space:nowrap;font-size:12px;line-height:14px;">Increase Offsite Manfufacturing</div>
<div style="position:absolute;left:907px;top:25px;white-space:nowrap;font-size:12px;line-height:14px;"></div>
<svg style="position:absolute;left:1093px;top:24px;" width="14" height="14" viewBox="0 0 14 14"><rect x="0.5" y="0.5" width="13" height="13" rx="1.5" fill="#f2f2f2" stroke="#c8c8c8"/><path d="M0.8 10.5 L3.8 3 L13.3 10.8" stroke="#b04ee0" stroke-width="1.5" fill="none"/></svg>
<svg style="position:absolute;left:1185px;top:21px;" width="20" height="20" viewBox="0 0 20 20"><rect x="0.5" y="0.5" width="19" height="19" rx="3" fill="#fff" stroke="#555" stroke-width="1.1"/><rect x="3.5" y="7.5" width="4.5" height="5" fill="#f0f0f0" stroke="#c0c0c0" stroke-width="0.9"/><path d="M10.5 5 H8.8 V15 H10.5 M8 10 H10.5" stroke="#3d8fd6" fill="none" stroke-width="0.9"/><rect x="10" y="3.3" width="7" height="3.4" rx="1.5" fill="#f4f4f4" stroke="#c0c0c0" stroke-width="0.9"/><rect x="10" y="8.3" width="7" height="3.4" rx="1.5" fill="#f4f4f4" stroke="#c0c0c0" stroke-width="0.9"/><rect x="10" y="13.3" width="7" height="3.4" rx="1.5" fill="#f4f4f4" stroke="#c0c0c0" stroke-width="0.9"/></svg>
<div style="position:absolute;left:1251px;top:25px;white-space:nowrap;font-size:12px;line-height:14px;">Medium</div>
<div style="position:absolute;left:1336px;top:25px;white-space:nowrap;font-size:12px;line-height:14px;">Very H</div>
<div style="position:absolute;left:0px;top:43px;width:15px;height:23px;background:#eff0f3"></div>
<div style="position:absolute;left:15px;top:43px;width:1354px;height:22px;background:#fff"></div>
<div style="position:absolute;left:0px;top:65px;width:1370px;height:1px;background:#d8dbe1"></div>
<div style="position:absolute;left:15px;top:43px;width:1px;height:23px;background:#d8dbe1"></div>
<div style="position:absolute;left:67px;top:43px;width:1px;height:23px;background:#d8dbe1"></div>
<div style="position:absolute;left:165px;top:43px;width:1px;height:23px;background:#d8dbe1"></div>
<div style="position:absolute;left:195px;top:43px;width:1px;height:23px;background:#d8dbe1"></div>
<div style="position:absolute;left:229px;top:43px;width:1px;height:23px;background:#d8dbe1"></div>
<div style="position:absolute;left:902px;top:43px;width:1px;height:23px;background:#d8dbe1"></div>
<div style="position:absolute;left:1059px;top:43px;width:1px;height:23px;background:#d8dbe1"></div>
<div style="position:absolute;left:1142px;top:43px;width:1px;height:23px;background:#d8dbe1"></div>
<div style="position:absolute;left:1246px;top:43px;width:1px;height:23px;background:#d8dbe1"></div>
<div style="position:absolute;left:1331px;top:43px;width:1px;height:23px;background:#d8dbe1"></div>
<svg style="position:absolute;left:34px;top:47px;" width="14" height="14" viewBox="0 0 14 14"><defs><linearGradient id="cg" x1="0" y1="0" x2="1" y2="1"><stop offset="0" stop-color="#d4d7dc"/><stop offset="1" stop-color="#fbfbfb"/></linearGradient></defs><rect x="0.5" y="0.5" width="13" height="13" fill="#fff" stroke="#7d7d7d"/><rect x="2" y="2" width="10" height="10" fill="url(#cg)"/><path d="M3.4 6.6 L5.9 10.6 L10.6 2.4" stroke="#3a3a3a" stroke-width="1.8" fill="none"/></svg>
<svg style="position:absolute;left:110px;top:47px;" width="14" height="14" viewBox="0 0 14 14"><rect x="0.5" y="0.5" width="13" height="13" fill="#fff" stroke="#e0e0e0"/><rect x="2" y="2" width="10" height="10" fill="#f6f6f6"/></svg>
<div style="position:absolute;left:170px;top:48px;white-space:nowrap;font-size:12px;line-height:14px;">R5</div>
<svg style="position:absolute;left:202px;top:48px;" width="13" height="13" viewBox="0 0 13 13"><rect x="0.5" y="0.5" width="12" height="11" rx="1" fill="#fff" stroke="#d0d0d0"/><rect x="1" y="1" width="11" height="2.5" fill="#cfcfcf"/><g stroke="#eee" stroke-width="0.6"><path d="M1 6H12M1 9H12M4.5 3.5V11.5M8.5 3.5V11.5"/></g><rect x="8" y="8.5" width="4.5" height="3.5" fill="#fff" stroke="#e05050" stroke-width="0.9"/></svg>
<div style="position:absolute;left:234px;top:48px;white-space:nowrap;font-size:12px;line-height:14px;">Liquidated Damages</div>
<div style="position:absolute;left:907px;top:48px;white-space:nowrap;font-size:12px;line-height:14px;"></div>
<svg style="position:absolute;left:1093px;top:47px;" width="14" height="14" viewBox="0 0 14 14"><rect x="0.5" y="0.5" width="13" height="13" rx="1.5" fill="#f2f2f2" stroke="#c8c8c8"/><path d="M0.3 10.5 H3 V3.8 H11 V10.5 H13.7" stroke="#5cb85c" stroke-width="1.2" fill="none"/></svg>
<svg style="position:absolute;left:1185px;top:44px;" width="20" height="20" viewBox="0 0 20 20"><rect x="0.5" y="0.5" width="19" height="19" rx="3" fill="#fff" stroke="#555" stroke-width="1.1"/><rect x="3.5" y="7.5" width="4.5" height="5" fill="#f0f0f0" stroke="#c0c0c0" stroke-width="0.9"/><path d="M10.5 5 H8.8 V15 H10.5 M8 10 H10.5" stroke="#3d8fd6" fill="none" stroke-width="0.9"/><rect x="10" y="3.3" width="7" height="3.4" rx="1.5" fill="#f4f4f4" stroke="#c0c0c0" stroke-width="0.9"/><rect x="10" y="8.3" width="7" height="3.4" rx="1.5" fill="#f4f4f4" stroke="#c0c0c0" stroke-width="0.9"/><rect x="10" y="13.3" width="7" height="3.4" rx="1.5" fill="#f4f4f4" stroke="#c0c0c0" stroke-width="0.9"/></svg>
<div style="position:absolute;left:1251px;top:48px;white-space:nowrap;font-size:12px;line-height:14px;color:#c4c4c4">Negligible</div>
<div style="position:absolute;left:1336px;top:48px;white-space:nowrap;font-size:12px;line-height:14px;color:#c4c4c4">Neglig</div>
<div style="position:absolute;left:0px;top:66px;width:15px;height:23px;background:#eff0f3"></div>
<div style="position:absolute;left:15px;top:66px;width:1354px;height:22px;background:#fff"></div>
<div style="position:absolute;left:0px;top:88px;width:1370px;height:1px;background:#d8dbe1"></div>
<div style="position:absolute;left:15px;top:66px;width:1px;height:23px;background:#d8dbe1"></div>
<div style="position:absolute;left:67px;top:66px;width:1px;height:23px;background:#d8dbe1"></div>
<div style="position:absolute;left:165px;top:66px;width:1px;height:23px;background:#d8dbe1"></div>
<div style="position:absolute;left:195px;top:66px;width:1px;height:23px;background:#d8dbe1"></div>
<div style="position:absolute;left:229px;top:66px;width:1px;height:23px;background:#d8dbe1"></div>
<div style="position:absolute;left:902px;top:66px;width:1px;height:23px;background:#d8dbe1"></div>
<div style="position:absolute;left:1059px;top:66px;width:1px;height:23px;background:#d8dbe1"></div>
<div style="position:absolute;left:1142px;top:66px;width:1px;height:23px;background:#d8dbe1"></div>
<div style="position:absolute;left:1246px;top:66px;width:1px;height:23px;background:#d8dbe1"></div>
<div style="position:absolute;left:1331px;top:66px;width:1px;height:23px;background:#d8dbe1"></div>
<svg style="position:absolute;left:34px;top:70px;" width="14" height="14" viewBox="0 0 14 14"><defs><linearGradient id="cg" x1="0" y1="0" x2="1" y2="1"><stop offset="0" stop-color="#d4d7dc"/><stop offset="1" stop-color="#fbfbfb"/></linearGradient></defs><rect x="0.5" y="0.5" width="13" height="13" fill="#fff" stroke="#7d7d7d"/><rect x="2" y="2" width="10" height="10" fill="url(#cg)"/><path d="M3.4 6.6 L5.9 10.6 L10.6 2.4" stroke="#3a3a3a" stroke-width="1.8" fill="none"/></svg>
<svg style="position:absolute;left:110px;top:70px;" width="14" height="14" viewBox="0 0 14 14"><rect x="0.5" y="0.5" width="13" height="13" fill="#fff" stroke="#e0e0e0"/><rect x="2" y="2" width="10" height="10" fill="#f6f6f6"/></svg>
<div style="position:absolute;left:170px;top:71px;white-space:nowrap;font-size:12px;line-height:14px;">R6</div>
<svg style="position:absolute;left:202px;top:71px;" width="13" height="13" viewBox="0 0 13 13"><rect x="0.5" y="0.5" width="12" height="11" rx="1" fill="#fff" stroke="#d0d0d0"/><rect x="1" y="1" width="11" height="2.5" fill="#cfcfcf"/><rect x="4" y="5" width="5" height="4" fill="#3b8ad6"/></svg>
<svg style="position:absolute;left:231px;top:70px;" width="15" height="15" viewBox="0 0 15 15"><path d="M3.3 0.0 C3.56 2.18 4.42 3.04 6.60 3.30 C4.42 3.56 3.56 4.42 3.30 6.60 C3.04 4.42 2.18 3.56 0.00 3.30 C2.18 3.04 3.04 2.18 3.30 0.00Z" fill="#8a2fc8"/><path d="M8.8 3.0999999999999996 C9.27 6.99 10.81 8.53 14.70 9.00 C10.81 9.47 9.27 11.01 8.80 14.90 C8.33 11.01 6.79 9.47 2.90 9.00 C6.79 8.53 8.33 6.99 8.80 3.10Z" fill="#8a2fc8"/></svg>
<div style="position:absolute;left:254px;top:71px;white-space:nowrap;font-size:12px;line-height:14px;">Hurricane season causing offshore platform construction delays in Mississippi and Louisiana</div>
<div style="position:absolute;left:907px;top:71px;white-space:nowrap;font-size:12px;line-height:14px;">mississippi,louisiana</div>
<svg style="position:absolute;left:1093px;top:70px;" width="14" height="14" viewBox="0 0 14 14"><rect x="0.5" y="0.5" width="13" height="13" rx="1.5" fill="#f2f2f2" stroke="#c8c8c8"/><path d="M0.3 10.5 H3 V3.8 H11 V10.5 H13.7" stroke="#5cb85c" stroke-width="1.2" fill="none"/></svg>
<svg style="position:absolute;left:1185px;top:67px;" width="20" height="20" viewBox="0 0 20 20"><rect x="0.5" y="0.5" width="19" height="19" rx="3" fill="#fff" stroke="#555" stroke-width="1.1"/><rect x="3.5" y="7.5" width="4.5" height="5" fill="#f0f0f0" stroke="#c0c0c0" stroke-width="0.9"/><path d="M10.5 5 H8.8 V15 H10.5 M8 10 H10.5" stroke="#3d8fd6" fill="none" stroke-width="0.9"/><rect x="10" y="3.3" width="7" height="3.4" rx="1.5" fill="#f4f4f4" stroke="#c0c0c0" stroke-width="0.9"/><rect x="10" y="8.3" width="7" height="3.4" rx="1.5" fill="#f4f4f4" stroke="#c0c0c0" stroke-width="0.9"/><rect x="10" y="13.3" width="7" height="3.4" rx="1.5" fill="#f4f4f4" stroke="#c0c0c0" stroke-width="0.9"/></svg>
<div style="position:absolute;left:1251px;top:71px;white-space:nowrap;font-size:12px;line-height:14px;color:#c4c4c4">Negligible</div>
<div style="position:absolute;left:1336px;top:71px;white-space:nowrap;font-size:12px;line-height:14px;color:#c4c4c4">Neglig</div>
<div style="position:absolute;left:0px;top:89px;width:15px;height:23px;background:#eff0f3"></div>
<div style="position:absolute;left:15px;top:89px;width:1354px;height:22px;background:#fff"></div>
<div style="position:absolute;left:0px;top:111px;width:1370px;height:1px;background:#d8dbe1"></div>
<div style="position:absolute;left:15px;top:89px;width:1px;height:23px;background:#d8dbe1"></div>
<div style="position:absolute;left:67px;top:89px;width:1px;height:23px;background:#d8dbe1"></div>
<div style="position:absolute;left:165px;top:89px;width:1px;height:23px;background:#d8dbe1"></div>
<div style="position:absolute;left:195px;top:89px;width:1px;height:23px;background:#d8dbe1"></div>
<div style="position:absolute;left:229px;top:89px;width:1px;height:23px;background:#d8dbe1"></div>
<div style="position:absolute;left:902px;top:89px;width:1px;height:23px;background:#d8dbe1"></div>
<div style="position:absolute;left:1059px;top:89px;width:1px;height:23px;background:#d8dbe1"></div>
<div style="position:absolute;left:1142px;top:89px;width:1px;height:23px;background:#d8dbe1"></div>
<div style="position:absolute;left:1246px;top:89px;width:1px;height:23px;background:#d8dbe1"></div>
<div style="position:absolute;left:1331px;top:89px;width:1px;height:23px;background:#d8dbe1"></div>
<svg style="position:absolute;left:34px;top:93px;" width="14" height="14" viewBox="0 0 14 14"><defs><linearGradient id="cg" x1="0" y1="0" x2="1" y2="1"><stop offset="0" stop-color="#d4d7dc"/><stop offset="1" stop-color="#fbfbfb"/></linearGradient></defs><rect x="0.5" y="0.5" width="13" height="13" fill="#fff" stroke="#7d7d7d"/><rect x="2" y="2" width="10" height="10" fill="url(#cg)"/><path d="M3.4 6.6 L5.9 10.6 L10.6 2.4" stroke="#3a3a3a" stroke-width="1.8" fill="none"/></svg>
<svg style="position:absolute;left:110px;top:93px;" width="14" height="14" viewBox="0 0 14 14"><defs><linearGradient id="ug" x1="0" y1="0" x2="1" y2="1"><stop offset="0" stop-color="#d4d7dc"/><stop offset="1" stop-color="#fbfbfb"/></linearGradient></defs><rect x="0.5" y="0.5" width="13" height="13" fill="#fff" stroke="#7d7d7d"/><rect x="2" y="2" width="10" height="10" fill="url(#ug)"/></svg>
<div style="position:absolute;left:170px;top:94px;white-space:nowrap;font-size:12px;line-height:14px;">R7</div>
<svg style="position:absolute;left:201px;top:93px;" width="16" height="16" viewBox="0 0 16 16"><path d="M1.5 3 C1.5 1.5 2.5 1 4 1 H10.5 V8.5 C9 9.5 8 10.5 7 12 C6.3 13 6.5 14 5.8 14.5 C4.8 15 4 14 4.3 12.5 L5 10 H2.8 C1.8 10 1 9.3 1.2 8.2 Z" fill="#efb28a" stroke="#c27a4c" stroke-width="0.9"/><rect x="10.5" y="1" width="4" height="7" fill="#e04a4a"/></svg>
<svg style="position:absolute;left:231px;top:93px;" width="15" height="15" viewBox="0 0 15 15"><path d="M3.3 0.0 C3.56 2.18 4.42 3.04 6.60 3.30 C4.42 3.56 3.56 4.42 3.30 6.60 C3.04 4.42 2.18 3.56 0.00 3.30 C2.18 3.04 3.04 2.18 3.30 0.00Z" fill="#8a2fc8"/><path d="M8.8 3.0999999999999996 C9.27 6.99 10.81 8.53 14.70 9.00 C10.81 9.47 9.27 11.01 8.80 14.90 C8.33 11.01 6.79 9.47 2.90 9.00 C6.79 8.53 8.33 6.99 8.80 3.10Z" fill="#8a2fc8"/></svg>
<div style="position:absolute;left:254px;top:94px;white-space:nowrap;font-size:12px;line-height:14px;">Severe weather disruptions impacting shipping of components from California to Mississippi</div>
<div style="position:absolute;left:907px;top:94px;white-space:nowrap;font-size:12px;line-height:14px;">california,mississippi</div>
<svg style="position:absolute;left:1093px;top:93px;" width="14" height="14" viewBox="0 0 14 14"><rect x="0.5" y="0.5" width="13" height="13" rx="1.5" fill="#f2f2f2" stroke="#c8c8c8"/><path d="M0.3 10.5 H3 V3.8 H11 V10.5 H13.7" stroke="#5cb85c" stroke-width="1.2" fill="none"/></svg>
<svg style="position:absolute;left:1185px;top:90px;" width="20" height="20" viewBox="0 0 20 20"><rect x="0.5" y="0.5" width="19" height="19" rx="3" fill="#fff" stroke="#555" stroke-width="1.1"/><rect x="3.5" y="7.5" width="4.5" height="5" fill="#f0f0f0" stroke="#c0c0c0" stroke-width="0.9"/><path d="M10.5 5 H8.8 V15 H10.5 M8 10 H10.5" stroke="#3d8fd6" fill="none" stroke-width="0.9"/><rect x="10" y="3.3" width="7" height="3.4" rx="1.5" fill="#f4f4f4" stroke="#c0c0c0" stroke-width="0.9"/><rect x="10" y="8.3" width="7" height="3.4" rx="1.5" fill="#f4f4f4" stroke="#c0c0c0" stroke-width="0.9"/><rect x="10" y="13.3" width="7" height="3.4" rx="1.5" fill="#f4f4f4" stroke="#c0c0c0" stroke-width="0.9"/></svg>
<div style="position:absolute;left:1251px;top:94px;white-space:nowrap;font-size:12px;line-height:14px;">Negligible</div>
<div style="position:absolute;left:1336px;top:94px;white-space:nowrap;font-size:12px;line-height:14px;">Neglig</div>
<div style="position:absolute;left:0px;top:112px;width:15px;height:23px;background:#eff0f3"></div>
<div style="position:absolute;left:15px;top:112px;width:1354px;height:22px;background:#f1f2f4"></div>
<div style="position:absolute;left:0px;top:134px;width:1370px;height:1px;background:#d8dbe1"></div>
<div style="position:absolute;left:15px;top:112px;width:1px;height:23px;background:#d8dbe1"></div>
<div style="position:absolute;left:67px;top:112px;width:1px;height:23px;background:#d8dbe1"></div>
<div style="position:absolute;left:165px;top:112px;width:1px;height:23px;background:#d8dbe1"></div>
<div style="position:absolute;left:195px;top:112px;width:1px;height:23px;background:#d8dbe1"></div>
<div style="position:absolute;left:229px;top:112px;width:1px;height:23px;background:#d8dbe1"></div>
<div style="position:absolute;left:902px;top:112px;width:1px;height:23px;background:#d8dbe1"></div>
<div style="position:absolute;left:1059px;top:112px;width:1px;height:23px;background:#d8dbe1"></div>
<div style="position:absolute;left:1142px;top:112px;width:1px;height:23px;background:#d8dbe1"></div>
<div style="position:absolute;left:1246px;top:112px;width:1px;height:23px;background:#d8dbe1"></div>
<div style="position:absolute;left:1331px;top:112px;width:1px;height:23px;background:#d8dbe1"></div>
<svg style="position:absolute;left:6px;top:119px;" width="5" height="8" viewBox="0 0 5 8"><path d="M0 0 L4.5 4 L0 8 Z" fill="#6c6a9a"/></svg>
<svg style="position:absolute;left:34px;top:116px;" width="14" height="14" viewBox="0 0 14 14"><defs><linearGradient id="cg" x1="0" y1="0" x2="1" y2="1"><stop offset="0" stop-color="#d4d7dc"/><stop offset="1" stop-color="#fbfbfb"/></linearGradient></defs><rect x="0.5" y="0.5" width="13" height="13" fill="#fff" stroke="#7d7d7d"/><rect x="2" y="2" width="10" height="10" fill="url(#cg)"/><path d="M3.4 6.6 L5.9 10.6 L10.6 2.4" stroke="#3a3a3a" stroke-width="1.8" fill="none"/></svg>
<svg style="position:absolute;left:110px;top:116px;" width="14" height="14" viewBox="0 0 14 14"><defs><linearGradient id="ug" x1="0" y1="0" x2="1" y2="1"><stop offset="0" stop-color="#d4d7dc"/><stop offset="1" stop-color="#fbfbfb"/></linearGradient></defs><rect x="0.5" y="0.5" width="13" height="13" fill="#fff" stroke="#7d7d7d"/><rect x="2" y="2" width="10" height="10" fill="url(#ug)"/></svg>
<div style="position:absolute;left:170px;top:117px;white-space:nowrap;font-size:12px;line-height:14px;">R8</div>
<svg style="position:absolute;left:201px;top:116px;" width="16" height="16" viewBox="0 0 16 16"><path d="M1.5 3 C1.5 1.5 2.5 1 4 1 H10.5 V8.5 C9 9.5 8 10.5 7 12 C6.3 13 6.5 14 5.8 14.5 C4.8 15 4 14 4.3 12.5 L5 10 H2.8 C1.8 10 1 9.3 1.2 8.2 Z" fill="#efb28a" stroke="#c27a4c" stroke-width="0.9"/><rect x="10.5" y="1" width="4" height="7" fill="#e04a4a"/></svg>
<svg style="position:absolute;left:231px;top:116px;" width="15" height="15" viewBox="0 0 15 15"><path d="M3.3 0.0 C3.56 2.18 4.42 3.04 6.60 3.30 C4.42 3.56 3.56 4.42 3.30 6.60 C3.04 4.42 2.18 3.56 0.00 3.30 C2.18 3.04 3.04 2.18 3.30 0.00Z" fill="#8a2fc8"/><path d="M8.8 3.0999999999999996 C9.27 6.99 10.81 8.53 14.70 9.00 C10.81 9.47 9.27 11.01 8.80 14.90 C8.33 11.01 6.79 9.47 2.90 9.00 C6.79 8.53 8.33 6.99 8.80 3.10Z" fill="#8a2fc8"/></svg>
<div style="position:absolute;left:254px;top:117px;white-space:nowrap;font-size:12px;line-height:14px;">Port congestion delays in California affecting shipment schedules</div>
<div style="position:absolute;left:907px;top:117px;white-space:nowrap;font-size:12px;line-height:14px;">california</div>
<svg style="position:absolute;left:1093px;top:116px;" width="14" height="14" viewBox="0 0 14 14"><rect x="0.5" y="0.5" width="13" height="13" rx="1.5" fill="#f2f2f2" stroke="#c8c8c8"/><path d="M0.3 10.5 H3 V3.8 H11 V10.5 H13.7" stroke="#5cb85c" stroke-width="1.2" fill="none"/></svg>
<svg style="position:absolute;left:1185px;top:113px;" width="20" height="20" viewBox="0 0 20 20"><rect x="0.5" y="0.5" width="19" height="19" rx="3" fill="#fff" stroke="#555" stroke-width="1.1"/><rect x="3.5" y="7.5" width="4.5" height="5" fill="#f0f0f0" stroke="#c0c0c0" stroke-width="0.9"/><path d="M10.5 5 H8.8 V15 H10.5 M8 10 H10.5" stroke="#3d8fd6" fill="none" stroke-width="0.9"/><rect x="10" y="3.3" width="7" height="3.4" rx="1.5" fill="#f4f4f4" stroke="#c0c0c0" stroke-width="0.9"/><rect x="10" y="8.3" width="7" height="3.4" rx="1.5" fill="#f4f4f4" stroke="#c0c0c0" stroke-width="0.9"/><rect x="10" y="13.3" width="7" height="3.4" rx="1.5" fill="#f4f4f4" stroke="#c0c0c0" stroke-width="0.9"/></svg>
<div style="position:absolute;left:1251px;top:117px;white-space:nowrap;font-size:12px;line-height:14px;">Negligible</div>
<div style="position:absolute;left:1336px;top:117px;white-space:nowrap;font-size:12px;line-height:14px;">Neglig</div>
<div style="position:absolute;left:0px;top:135px;width:15px;height:23px;background:#eff0f3"></div>
<div style="position:absolute;left:15px;top:135px;width:1354px;height:22px;background:#fff"></div>
<div style="position:absolute;left:0px;top:157px;width:1370px;height:1px;background:#d8dbe1"></div>
<div style="position:absolute;left:15px;top:135px;width:1px;height:23px;background:#d8dbe1"></div>
<div style="position:absolute;left:67px;top:135px;width:1px;height:23px;background:#d8dbe1"></div>
<div style="position:absolute;left:165px;top:135px;width:1px;height:23px;background:#d8dbe1"></div>
<div style="position:absolute;left:195px;top:135px;width:1px;height:23px;background:#d8dbe1"></div>
<div style="position:absolute;left:229px;top:135px;width:1px;height:23px;background:#d8dbe1"></div>
<div style="position:absolute;left:902px;top:135px;width:1px;height:23px;background:#d8dbe1"></div>
<div style="position:absolute;left:1059px;top:135px;width:1px;height:23px;background:#d8dbe1"></div>
<div style="position:absolute;left:1142px;top:135px;width:1px;height:23px;background:#d8dbe1"></div>
<div style="position:absolute;left:1246px;top:135px;width:1px;height:23px;background:#d8dbe1"></div>
<div style="position:absolute;left:1331px;top:135px;width:1px;height:23px;background:#d8dbe1"></div>
<svg style="position:absolute;left:34px;top:139px;" width="14" height="14" viewBox="0 0 14 14"><defs><linearGradient id="cg" x1="0" y1="0" x2="1" y2="1"><stop offset="0" stop-color="#d4d7dc"/><stop offset="1" stop-color="#fbfbfb"/></linearGradient></defs><rect x="0.5" y="0.5" width="13" height="13" fill="#fff" stroke="#7d7d7d"/><rect x="2" y="2" width="10" height="10" fill="url(#cg)"/><path d="M3.4 6.6 L5.9 10.6 L10.6 2.4" stroke="#3a3a3a" stroke-width="1.8" fill="none"/></svg>
<svg style="position:absolute;left:110px;top:139px;" width="14" height="14" viewBox="0 0 14 14"><defs><linearGradient id="ug" x1="0" y1="0" x2="1" y2="1"><stop offset="0" stop-color="#d4d7dc"/><stop offset="1" stop-color="#fbfbfb"/></linearGradient></defs><rect x="0.5" y="0.5" width="13" height="13" fill="#fff" stroke="#7d7d7d"/><rect x="2" y="2" width="10" height="10" fill="url(#ug)"/></svg>
<div style="position:absolute;left:170px;top:140px;white-space:nowrap;font-size:12px;line-height:14px;">R9</div>
<svg style="position:absolute;left:201px;top:139px;" width="16" height="16" viewBox="0 0 16 16"><path d="M1.5 3 C1.5 1.5 2.5 1 4 1 H10.5 V8.5 C9 9.5 8 10.5 7 12 C6.3 13 6.5 14 5.8 14.5 C4.8 15 4 14 4.3 12.5 L5 10 H2.8 C1.8 10 1 9.3 1.2 8.2 Z" fill="#efb28a" stroke="#c27a4c" stroke-width="0.9"/><rect x="10.5" y="1" width="4" height="7" fill="#e04a4a"/></svg>
<svg style="position:absolute;left:231px;top:139px;" width="15" height="15" viewBox="0 0 15 15"><path d="M3.3 0.0 C3.56 2.18 4.42 3.04 6.60 3.30 C4.42 3.56 3.56 4.42 3.30 6.60 C3.04 4.42 2.18 3.56 0.00 3.30 C2.18 3.04 3.04 2.18 3.30 0.00Z" fill="#8a2fc8"/><path d="M8.8 3.0999999999999996 C9.27 6.99 10.81 8.53 14.70 9.00 C10.81 9.47 9.27 11.01 8.80 14.90 C8.33 11.01 6.79 9.47 2.90 9.00 C6.79 8.53 8.33 6.99 8.80 3.10Z" fill="#8a2fc8"/></svg>
<div style="position:absolute;left:254px;top:140px;white-space:nowrap;font-size:12px;line-height:14px;">Regulatory inspection delays for offshore platform assembly in Mississippi</div>
<div style="position:absolute;left:907px;top:140px;white-space:nowrap;font-size:12px;line-height:14px;">mississippi</div>
<svg style="position:absolute;left:1093px;top:139px;" width="14" height="14" viewBox="0 0 14 14"><rect x="0.5" y="0.5" width="13" height="13" rx="1.5" fill="#f2f2f2" stroke="#c8c8c8"/><path d="M0.3 10.5 H3 V3.8 H11 V10.5 H13.7" stroke="#5cb85c" stroke-width="1.2" fill="none"/></svg>
<svg style="position:absolute;left:1185px;top:136px;" width="20" height="20" viewBox="0 0 20 20"><rect x="0.5" y="0.5" width="19" height="19" rx="3" fill="#fff" stroke="#555" stroke-width="1.1"/><rect x="3.5" y="7.5" width="4.5" height="5" fill="#f0f0f0" stroke="#c0c0c0" stroke-width="0.9"/><path d="M10.5 5 H8.8 V15 H10.5 M8 10 H10.5" stroke="#3d8fd6" fill="none" stroke-width="0.9"/><rect x="10" y="3.3" width="7" height="3.4" rx="1.5" fill="#f4f4f4" stroke="#c0c0c0" stroke-width="0.9"/><rect x="10" y="8.3" width="7" height="3.4" rx="1.5" fill="#f4f4f4" stroke="#c0c0c0" stroke-width="0.9"/><rect x="10" y="13.3" width="7" height="3.4" rx="1.5" fill="#f4f4f4" stroke="#c0c0c0" stroke-width="0.9"/></svg>
<div style="position:absolute;left:1251px;top:140px;white-space:nowrap;font-size:12px;line-height:14px;">Negligible</div>
<div style="position:absolute;left:1336px;top:140px;white-space:nowrap;font-size:12px;line-height:14px;">Neglig</div>
<div style="position:absolute;left:0px;top:158px;width:15px;height:23px;background:#eff0f3"></div>
<div style="position:absolute;left:15px;top:158px;width:1354px;height:22px;background:#fff"></div>
<div style="position:absolute;left:0px;top:180px;width:1370px;height:1px;background:#d8dbe1"></div>
<div style="position:absolute;left:15px;top:158px;width:1px;height:23px;background:#d8dbe1"></div>
<div style="position:absolute;left:67px;top:158px;width:1px;height:23px;background:#d8dbe1"></div>
<div style="position:absolute;left:165px;top:158px;width:1px;height:23px;background:#d8dbe1"></div>
<div style="position:absolute;left:195px;top:158px;width:1px;height:23px;background:#d8dbe1"></div>
<div style="position:absolute;left:229px;top:158px;width:1px;height:23px;background:#d8dbe1"></div>
<div style="position:absolute;left:902px;top:158px;width:1px;height:23px;background:#d8dbe1"></div>
<div style="position:absolute;left:1059px;top:158px;width:1px;height:23px;background:#d8dbe1"></div>
<div style="position:absolute;left:1142px;top:158px;width:1px;height:23px;background:#d8dbe1"></div>
<div style="position:absolute;left:1246px;top:158px;width:1px;height:23px;background:#d8dbe1"></div>
<div style="position:absolute;left:1331px;top:158px;width:1px;height:23px;background:#d8dbe1"></div>
<svg style="position:absolute;left:34px;top:162px;" width="14" height="14" viewBox="0 0 14 14"><defs><linearGradient id="cg" x1="0" y1="0" x2="1" y2="1"><stop offset="0" stop-color="#d4d7dc"/><stop offset="1" stop-color="#fbfbfb"/></linearGradient></defs><rect x="0.5" y="0.5" width="13" height="13" fill="#fff" stroke="#7d7d7d"/><rect x="2" y="2" width="10" height="10" fill="url(#cg)"/><path d="M3.4 6.6 L5.9 10.6 L10.6 2.4" stroke="#3a3a3a" stroke-width="1.8" fill="none"/></svg>
<svg style="position:absolute;left:110px;top:162px;" width="14" height="14" viewBox="0 0 14 14"><defs><linearGradient id="ug" x1="0" y1="0" x2="1" y2="1"><stop offset="0" stop-color="#d4d7dc"/><stop offset="1" stop-color="#fbfbfb"/></linearGradient></defs><rect x="0.5" y="0.5" width="13" height="13" fill="#fff" stroke="#7d7d7d"/><rect x="2" y="2" width="10" height="10" fill="url(#ug)"/></svg>
<div style="position:absolute;left:170px;top:163px;white-space:nowrap;font-size:12px;line-height:14px;">R10</div>
<svg style="position:absolute;left:201px;top:162px;" width="16" height="16" viewBox="0 0 16 16"><path d="M4.5 6 C5.5 5 6.5 3.5 6.5 1.8 C6.5 0.8 7.3 0.3 8 0.8 C8.8 1.5 8.6 3 8.2 5 H12 C13 5 13.8 5.8 13.6 6.8 L13.2 11.5 C13 12.8 12.2 13.5 11 13.5 H4.5 Z" fill="#efb28a" stroke="#c27a4c" stroke-width="0.9"/><rect x="0.5" y="6" width="4" height="7" fill="#4cb050"/></svg>
<svg style="position:absolute;left:231px;top:162px;" width="15" height="15" viewBox="0 0 15 15"><path d="M3.3 0.0 C3.56 2.18 4.42 3.04 6.60 3.30 C4.42 3.56 3.56 4.42 3.30 6.60 C3.04 4.42 2.18 3.56 0.00 3.30 C2.18 3.04 3.04 2.18 3.30 0.00Z" fill="#8a2fc8"/><path d="M8.8 3.0999999999999996 C9.27 6.99 10.81 8.53 14.70 9.00 C10.81 9.47 9.27 11.01 8.80 14.90 C8.33 11.01 6.79 9.47 2.90 9.00 C6.79 8.53 8.33 6.99 8.80 3.10Z" fill="#8a2fc8"/></svg>
<div style="position:absolute;left:254px;top:163px;white-space:nowrap;font-size:12px;line-height:14px;">Opportunity to optimize logistics by coordinating component shipment schedules between California and Mississippi</div>
<div style="position:absolute;left:907px;top:163px;white-space:nowrap;font-size:12px;line-height:14px;">california,mississippi</div>
<svg style="position:absolute;left:1093px;top:162px;" width="14" height="14" viewBox="0 0 14 14"><rect x="0.5" y="0.5" width="13" height="13" rx="1.5" fill="#f2f2f2" stroke="#c8c8c8"/><path d="M0.3 10.5 H3 V3.8 H11 V10.5 H13.7" stroke="#5cb85c" stroke-width="1.2" fill="none"/></svg>
<svg style="position:absolute;left:1185px;top:159px;" width="20" height="20" viewBox="0 0 20 20"><rect x="0.5" y="0.5" width="19" height="19" rx="3" fill="#fff" stroke="#555" stroke-width="1.1"/><rect x="3.5" y="7.5" width="4.5" height="5" fill="#f0f0f0" stroke="#c0c0c0" stroke-width="0.9"/><path d="M10.5 5 H8.8 V15 H10.5 M8 10 H10.5" stroke="#3d8fd6" fill="none" stroke-width="0.9"/><rect x="10" y="3.3" width="7" height="3.4" rx="1.5" fill="#f4f4f4" stroke="#c0c0c0" stroke-width="0.9"/><rect x="10" y="8.3" width="7" height="3.4" rx="1.5" fill="#f4f4f4" stroke="#c0c0c0" stroke-width="0.9"/><rect x="10" y="13.3" width="7" height="3.4" rx="1.5" fill="#f4f4f4" stroke="#c0c0c0" stroke-width="0.9"/></svg>
<div style="position:absolute;left:1251px;top:163px;white-space:nowrap;font-size:12px;line-height:14px;">Negligible</div>
<div style="position:absolute;left:1336px;top:163px;white-space:nowrap;font-size:12px;line-height:14px;">Neglig</div>
<div style="position:absolute;left:0px;top:181px;width:15px;height:23px;background:#eff0f3"></div>
<div style="position:absolute;left:15px;top:181px;width:1354px;height:22px;background:#fff"></div>
<div style="position:absolute;left:0px;top:203px;width:1370px;height:1px;background:#d8dbe1"></div>
<div style="position:absolute;left:15px;top:181px;width:1px;height:23px;background:#d8dbe1"></div>
<div style="position:absolute;left:67px;top:181px;width:1px;height:23px;background:#d8dbe1"></div>
<div style="position:absolute;left:165px;top:181px;width:1px;height:23px;background:#d8dbe1"></div>
<div style="position:absolute;left:195px;top:181px;width:1px;height:23px;background:#d8dbe1"></div>
<div style="position:absolute;left:229px;top:181px;width:1px;height:23px;background:#d8dbe1"></div>
<div style="position:absolute;left:902px;top:181px;width:1px;height:23px;background:#d8dbe1"></div>
<div style="position:absolute;left:1059px;top:181px;width:1px;height:23px;background:#d8dbe1"></div>
<div style="position:absolute;left:1142px;top:181px;width:1px;height:23px;background:#d8dbe1"></div>
<div style="position:absolute;left:1246px;top:181px;width:1px;height:23px;background:#d8dbe1"></div>
<div style="position:absolute;left:1331px;top:181px;width:1px;height:23px;background:#d8dbe1"></div>
<svg style="position:absolute;left:34px;top:185px;" width="14" height="14" viewBox="0 0 14 14"><defs><linearGradient id="cg" x1="0" y1="0" x2="1" y2="1"><stop offset="0" stop-color="#d4d7dc"/><stop offset="1" stop-color="#fbfbfb"/></linearGradient></defs><rect x="0.5" y="0.5" width="13" height="13" fill="#fff" stroke="#7d7d7d"/><rect x="2" y="2" width="10" height="10" fill="url(#cg)"/><path d="M3.4 6.6 L5.9 10.6 L10.6 2.4" stroke="#3a3a3a" stroke-width="1.8" fill="none"/></svg>
<svg style="position:absolute;left:110px;top:185px;" width="14" height="14" viewBox="0 0 14 14"><defs><linearGradient id="ug" x1="0" y1="0" x2="1" y2="1"><stop offset="0" stop-color="#d4d7dc"/><stop offset="1" stop-color="#fbfbfb"/></linearGradient></defs><rect x="0.5" y="0.5" width="13" height="13" fill="#fff" stroke="#7d7d7d"/><rect x="2" y="2" width="10" height="10" fill="url(#ug)"/></svg>
<div style="position:absolute;left:170px;top:186px;white-space:nowrap;font-size:12px;line-height:14px;">R11</div>
<svg style="position:absolute;left:201px;top:185px;" width="16" height="16" viewBox="0 0 16 16"><path d="M1.5 3 C1.5 1.5 2.5 1 4 1 H10.5 V8.5 C9 9.5 8 10.5 7 12 C6.3 13 6.5 14 5.8 14.5 C4.8 15 4 14 4.3 12.5 L5 10 H2.8 C1.8 10 1 9.3 1.2 8.2 Z" fill="#efb28a" stroke="#c27a4c" stroke-width="0.9"/><rect x="10.5" y="1" width="4" height="7" fill="#e04a4a"/></svg>
<svg style="position:absolute;left:231px;top:185px;" width="15" height="15" viewBox="0 0 15 15"><path d="M3.3 0.0 C3.56 2.18 4.42 3.04 6.60 3.30 C4.42 3.56 3.56 4.42 3.30 6.60 C3.04 4.42 2.18 3.56 0.00 3.30 C2.18 3.04 3.04 2.18 3.30 0.00Z" fill="#8a2fc8"/><path d="M8.8 3.0999999999999996 C9.27 6.99 10.81 8.53 14.70 9.00 C10.81 9.47 9.27 11.01 8.80 14.90 C8.33 11.01 6.79 9.47 2.90 9.00 C6.79 8.53 8.33 6.99 8.80 3.10Z" fill="#8a2fc8"/></svg>
<div style="position:absolute;left:254px;top:186px;white-space:nowrap;font-size:12px;line-height:14px;">Labor strikes in Louisiana impacting offshore platform construction timeline</div>
<div style="position:absolute;left:907px;top:186px;white-space:nowrap;font-size:12px;line-height:14px;">louisiana</div>
<svg style="position:absolute;left:1093px;top:185px;" width="14" height="14" viewBox="0 0 14 14"><rect x="0.5" y="0.5" width="13" height="13" rx="1.5" fill="#f2f2f2" stroke="#c8c8c8"/><path d="M0.3 10.5 H3 V3.8 H11 V10.5 H13.7" stroke="#5cb85c" stroke-width="1.2" fill="none"/></svg>
<svg style="position:absolute;left:1185px;top:182px;" width="20" height="20" viewBox="0 0 20 20"><rect x="0.5" y="0.5" width="19" height="19" rx="3" fill="#fff" stroke="#555" stroke-width="1.1"/><rect x="3.5" y="7.5" width="4.5" height="5" fill="#f0f0f0" stroke="#c0c0c0" stroke-width="0.9"/><path d="M10.5 5 H8.8 V15 H10.5 M8 10 H10.5" stroke="#3d8fd6" fill="none" stroke-width="0.9"/><rect x="10" y="3.3" width="7" height="3.4" rx="1.5" fill="#f4f4f4" stroke="#c0c0c0" stroke-width="0.9"/><rect x="10" y="8.3" width="7" height="3.4" rx="1.5" fill="#f4f4f4" stroke="#c0c0c0" stroke-width="0.9"/><rect x="10" y="13.3" width="7" height="3.4" rx="1.5" fill="#f4f4f4" stroke="#c0c0c0" stroke-width="0.9"/></svg>
<div style="position:absolute;left:1251px;top:186px;white-space:nowrap;font-size:12px;line-height:14px;">Negligible</div>
<div style="position:absolute;left:1336px;top:186px;white-space:nowrap;font-size:12px;line-height:14px;">Neglig</div>
<div style="position:absolute;left:0px;top:204px;width:15px;height:23px;background:#eff0f3"></div>
<div style="position:absolute;left:15px;top:204px;width:1354px;height:22px;background:#fff"></div>
<div style="position:absolute;left:0px;top:226px;width:1370px;height:1px;background:#d8dbe1"></div>
<div style="position:absolute;left:15px;top:204px;width:1px;height:23px;background:#d8dbe1"></div>
<div style="position:absolute;left:67px;top:204px;width:1px;height:23px;background:#d8dbe1"></div>
<div style="position:absolute;left:165px;top:204px;width:1px;height:23px;background:#d8dbe1"></div>
<div style="position:absolute;left:195px;top:204px;width:1px;height:23px;background:#d8dbe1"></div>
<div style="position:absolute;left:229px;top:204px;width:1px;height:23px;background:#d8dbe1"></div>
<div style="position:absolute;left:902px;top:204px;width:1px;height:23px;background:#d8dbe1"></div>
<div style="position:absolute;left:1059px;top:204px;width:1px;height:23px;background:#d8dbe1"></div>
<div style="position:absolute;left:1142px;top:204px;width:1px;height:23px;background:#d8dbe1"></div>
<div style="position:absolute;left:1246px;top:204px;width:1px;height:23px;background:#d8dbe1"></div>
<div style="position:absolute;left:1331px;top:204px;width:1px;height:23px;background:#d8dbe1"></div>
<svg style="position:absolute;left:34px;top:208px;" width="14" height="14" viewBox="0 0 14 14"><defs><linearGradient id="cg" x1="0" y1="0" x2="1" y2="1"><stop offset="0" stop-color="#d4d7dc"/><stop offset="1" stop-color="#fbfbfb"/></linearGradient></defs><rect x="0.5" y="0.5" width="13" height="13" fill="#fff" stroke="#7d7d7d"/><rect x="2" y="2" width="10" height="10" fill="url(#cg)"/><path d="M3.4 6.6 L5.9 10.6 L10.6 2.4" stroke="#3a3a3a" stroke-width="1.8" fill="none"/></svg>
<svg style="position:absolute;left:110px;top:208px;" width="14" height="14" viewBox="0 0 14 14"><rect x="0.5" y="0.5" width="13" height="13" fill="#fff" stroke="#e0e0e0"/><rect x="2" y="2" width="10" height="10" fill="#f6f6f6"/></svg>
<div style="position:absolute;left:170px;top:209px;white-space:nowrap;font-size:12px;line-height:14px;">R12</div>
<svg style="position:absolute;left:202px;top:209px;" width="13" height="13" viewBox="0 0 13 13"><rect x="0.5" y="0.5" width="12" height="11" rx="1" fill="#fff" stroke="#d0d0d0"/><rect x="1" y="1" width="11" height="2.5" fill="#cfcfcf"/><path d="M5.5 1 H10 L7.5 5 H9.5 L3 12.5 L5 6.5 H3.2 Z" fill="#f5cf4a"/></svg>
<svg style="position:absolute;left:231px;top:208px;" width="15" height="15" viewBox="0 0 15 15"><path d="M3.3 0.0 C3.56 2.18 4.42 3.04 6.60 3.30 C4.42 3.56 3.56 4.42 3.30 6.60 C3.04 4.42 2.18 3.56 0.00 3.30 C2.18 3.04 3.04 2.18 3.30 0.00Z" fill="#8a2fc8"/><path d="M8.8 3.0999999999999996 C9.27 6.99 10.81 8.53 14.70 9.00 C10.81 9.47 9.27 11.01 8.80 14.90 C8.33 11.01 6.79 9.47 2.90 9.00 C6.79 8.53 8.33 6.99 8.80 3.10Z" fill="#8a2fc8"/></svg>
<div style="position:absolute;left:254px;top:209px;white-space:nowrap;font-size:12px;line-height:14px;">Environmental compliance audits scheduled during project period in Louisiana</div>
<div style="position:absolute;left:907px;top:209px;white-space:nowrap;font-size:12px;line-height:14px;">louisiana</div>
<svg style="position:absolute;left:1093px;top:208px;" width="14" height="14" viewBox="0 0 14 14"><rect x="0.5" y="0.5" width="13" height="13" rx="1.5" fill="#f2f2f2" stroke="#c8c8c8"/><path d="M0.3 10.5 H3 V3.8 H11 V10.5 H13.7" stroke="#5cb85c" stroke-width="1.2" fill="none"/></svg>
<svg style="position:absolute;left:1185px;top:205px;" width="20" height="20" viewBox="0 0 20 20"><rect x="0.5" y="0.5" width="19" height="19" rx="3" fill="#fff" stroke="#555" stroke-width="1.1"/><rect x="3.5" y="7.5" width="4.5" height="5" fill="#f0f0f0" stroke="#c0c0c0" stroke-width="0.9"/><path d="M10.5 5 H8.8 V15 H10.5 M8 10 H10.5" stroke="#3d8fd6" fill="none" stroke-width="0.9"/><rect x="10" y="3.3" width="7" height="3.4" rx="1.5" fill="#f4f4f4" stroke="#c0c0c0" stroke-width="0.9"/><rect x="10" y="8.3" width="7" height="3.4" rx="1.5" fill="#f4f4f4" stroke="#c0c0c0" stroke-width="0.9"/><rect x="10" y="13.3" width="7" height="3.4" rx="1.5" fill="#f4f4f4" stroke="#c0c0c0" stroke-width="0.9"/></svg>
<div style="position:absolute;left:1251px;top:209px;white-space:nowrap;font-size:12px;line-height:14px;color:#c4c4c4">Negligible</div>
<div style="position:absolute;left:1336px;top:209px;white-space:nowrap;font-size:12px;line-height:14px;color:#c4c4c4">Neglig</div>
<div style="position:absolute;left:0px;top:227px;width:15px;height:23px;background:#eff0f3"></div>
<div style="position:absolute;left:15px;top:227px;width:1354px;height:22px;background:#fff"></div>
<div style="position:absolute;left:0px;top:249px;width:1370px;height:1px;background:#d8dbe1"></div>
<div style="position:absolute;left:15px;top:227px;width:1px;height:23px;background:#d8dbe1"></div>
<div style="position:absolute;left:67px;top:227px;width:1px;height:23px;background:#d8dbe1"></div>
<div style="position:absolute;left:165px;top:227px;width:1px;height:23px;background:#d8dbe1"></div>
<div style="position:absolute;left:195px;top:227px;width:1px;height:23px;background:#d8dbe1"></div>
<div style="position:absolute;left:229px;top:227px;width:1px;height:23px;background:#d8dbe1"></div>
<div style="position:absolute;left:902px;top:227px;width:1px;height:23px;background:#d8dbe1"></div>
<div style="position:absolute;left:1059px;top:227px;width:1px;height:23px;background:#d8dbe1"></div>
<div style="position:absolute;left:1142px;top:227px;width:1px;height:23px;background:#d8dbe1"></div>
<div style="position:absolute;left:1246px;top:227px;width:1px;height:23px;background:#d8dbe1"></div>
<div style="position:absolute;left:1331px;top:227px;width:1px;height:23px;background:#d8dbe1"></div>
<svg style="position:absolute;left:34px;top:231px;" width="14" height="14" viewBox="0 0 14 14"><defs><linearGradient id="cg" x1="0" y1="0" x2="1" y2="1"><stop offset="0" stop-color="#d4d7dc"/><stop offset="1" stop-color="#fbfbfb"/></linearGradient></defs><rect x="0.5" y="0.5" width="13" height="13" fill="#fff" stroke="#7d7d7d"/><rect x="2" y="2" width="10" height="10" fill="url(#cg)"/><path d="M3.4 6.6 L5.9 10.6 L10.6 2.4" stroke="#3a3a3a" stroke-width="1.8" fill="none"/></svg>
<svg style="position:absolute;left:110px;top:231px;" width="14" height="14" viewBox="0 0 14 14"><rect x="0.5" y="0.5" width="13" height="13" fill="#fff" stroke="#e0e0e0"/><rect x="2" y="2" width="10" height="10" fill="#f6f6f6"/></svg>
<div style="position:absolute;left:170px;top:232px;white-space:nowrap;font-size:12px;line-height:14px;">R13</div>
<svg style="position:absolute;left:202px;top:232px;" width="13" height="13" viewBox="0 0 13 13"><rect x="0.5" y="0.5" width="12" height="11" rx="1" fill="#fff" stroke="#d0d0d0"/><rect x="1" y="1" width="11" height="2.5" fill="#cfcfcf"/><g stroke="#eee" stroke-width="0.6"><path d="M1 6H12M1 9H12M4.5 3.5V11.5M8.5 3.5V11.5"/></g><rect x="8" y="8.5" width="4.5" height="3.5" fill="#fff" stroke="#e05050" stroke-width="0.9"/></svg>
<svg style="position:absolute;left:231px;top:231px;" width="15" height="15" viewBox="0 0 15 15"><path d="M3.3 0.0 C3.56 2.18 4.42 3.04 6.60 3.30 C4.42 3.56 3.56 4.42 3.30 6.60 C3.04 4.42 2.18 3.56 0.00 3.30 C2.18 3.04 3.04 2.18 3.30 0.00Z" fill="#8a2fc8"/><path d="M8.8 3.0999999999999996 C9.27 6.99 10.81 8.53 14.70 9.00 C10.81 9.47 9.27 11.01 8.80 14.90 C8.33 11.01 6.79 9.47 2.90 9.00 C6.79 8.53 8.33 6.99 8.80 3.10Z" fill="#8a2fc8"/></svg>
<div style="position:absolute;left:254px;top:232px;white-space:nowrap;font-size:12px;line-height:14px;">Delay penalty incurred if offshore platform construction not completed by project finish date</div>
<div style="position:absolute;left:907px;top:232px;white-space:nowrap;font-size:12px;line-height:14px;letter-spacing:-0.15px">mississippi,louisiana,califo...</div>
<svg style="position:absolute;left:1093px;top:231px;" width="14" height="14" viewBox="0 0 14 14"><rect x="0.5" y="0.5" width="13" height="13" rx="1.5" fill="#f2f2f2" stroke="#c8c8c8"/><path d="M0.3 10.5 H3 V3.8 H11 V10.5 H13.7" stroke="#5cb85c" stroke-width="1.2" fill="none"/></svg>
<svg style="position:absolute;left:1185px;top:228px;" width="20" height="20" viewBox="0 0 20 20"><rect x="0.5" y="0.5" width="19" height="19" rx="3" fill="#fff" stroke="#555" stroke-width="1.1"/><rect x="3.5" y="7.5" width="4.5" height="5" fill="#f0f0f0" stroke="#c0c0c0" stroke-width="0.9"/><path d="M10.5 5 H8.8 V15 H10.5 M8 10 H10.5" stroke="#3d8fd6" fill="none" stroke-width="0.9"/><rect x="10" y="3.3" width="7" height="3.4" rx="1.5" fill="#f4f4f4" stroke="#c0c0c0" stroke-width="0.9"/><rect x="10" y="8.3" width="7" height="3.4" rx="1.5" fill="#f4f4f4" stroke="#c0c0c0" stroke-width="0.9"/><rect x="10" y="13.3" width="7" height="3.4" rx="1.5" fill="#f4f4f4" stroke="#c0c0c0" stroke-width="0.9"/></svg>
<div style="position:absolute;left:1251px;top:232px;white-space:nowrap;font-size:12px;line-height:14px;color:#c4c4c4">Negligible</div>
<div style="position:absolute;left:1336px;top:232px;white-space:nowrap;font-size:12px;line-height:14px;color:#c4c4c4">Neglig</div>
<div style="position:absolute;left:0px;top:250px;width:15px;height:23px;background:#eff0f3"></div>
<div style="position:absolute;left:15px;top:250px;width:1354px;height:22px;background:#fff"></div>
<div style="position:absolute;left:0px;top:272px;width:1370px;height:1px;background:#d8dbe1"></div>
<div style="position:absolute;left:15px;top:250px;width:1px;height:23px;background:#d8dbe1"></div>
<div style="position:absolute;left:67px;top:250px;width:1px;height:23px;background:#d8dbe1"></div>
<div style="position:absolute;left:165px;top:250px;width:1px;height:23px;background:#d8dbe1"></div>
<div style="position:absolute;left:195px;top:250px;width:1px;height:23px;background:#d8dbe1"></div>
<div style="position:absolute;left:229px;top:250px;width:1px;height:23px;background:#d8dbe1"></div>
<div style="position:absolute;left:902px;top:250px;width:1px;height:23px;background:#d8dbe1"></div>
<div style="position:absolute;left:1059px;top:250px;width:1px;height:23px;background:#d8dbe1"></div>
<div style="position:absolute;left:1142px;top:250px;width:1px;height:23px;background:#d8dbe1"></div>
<div style="position:absolute;left:1246px;top:250px;width:1px;height:23px;background:#d8dbe1"></div>
<div style="position:absolute;left:1331px;top:250px;width:1px;height:23px;background:#d8dbe1"></div>
<svg style="position:absolute;left:34px;top:254px;" width="14" height="14" viewBox="0 0 14 14"><defs><linearGradient id="cg" x1="0" y1="0" x2="1" y2="1"><stop offset="0" stop-color="#d4d7dc"/><stop offset="1" stop-color="#fbfbfb"/></linearGradient></defs><rect x="0.5" y="0.5" width="13" height="13" fill="#fff" stroke="#7d7d7d"/><rect x="2" y="2" width="10" height="10" fill="url(#cg)"/><path d="M3.4 6.6 L5.9 10.6 L10.6 2.4" stroke="#3a3a3a" stroke-width="1.8" fill="none"/></svg>
<svg style="position:absolute;left:110px;top:254px;" width="14" height="14" viewBox="0 0 14 14"><defs><linearGradient id="ug" x1="0" y1="0" x2="1" y2="1"><stop offset="0" stop-color="#d4d7dc"/><stop offset="1" stop-color="#fbfbfb"/></linearGradient></defs><rect x="0.5" y="0.5" width="13" height="13" fill="#fff" stroke="#7d7d7d"/><rect x="2" y="2" width="10" height="10" fill="url(#ug)"/></svg>
<div style="position:absolute;left:170px;top:255px;white-space:nowrap;font-size:12px;line-height:14px;">R14</div>
<svg style="position:absolute;left:201px;top:254px;" width="16" height="16" viewBox="0 0 16 16"><path d="M4.5 6 C5.5 5 6.5 3.5 6.5 1.8 C6.5 0.8 7.3 0.3 8 0.8 C8.8 1.5 8.6 3 8.2 5 H12 C13 5 13.8 5.8 13.6 6.8 L13.2 11.5 C13 12.8 12.2 13.5 11 13.5 H4.5 Z" fill="#efb28a" stroke="#c27a4c" stroke-width="0.9"/><rect x="0.5" y="6" width="4" height="7" fill="#4cb050"/></svg>
<svg style="position:absolute;left:231px;top:254px;" width="15" height="15" viewBox="0 0 15 15"><path d="M3.3 0.0 C3.56 2.18 4.42 3.04 6.60 3.30 C4.42 3.56 3.56 4.42 3.30 6.60 C3.04 4.42 2.18 3.56 0.00 3.30 C2.18 3.04 3.04 2.18 3.30 0.00Z" fill="#8a2fc8"/><path d="M8.8 3.0999999999999996 C9.27 6.99 10.81 8.53 14.70 9.00 C10.81 9.47 9.27 11.01 8.80 14.90 C8.33 11.01 6.79 9.47 2.90 9.00 C6.79 8.53 8.33 6.99 8.80 3.10Z" fill="#8a2fc8"/></svg>
<div style="position:absolute;left:254px;top:255px;white-space:nowrap;font-size:12px;line-height:14px;">Opportunity to reduce costs by using local suppliers in Louisiana for assembly components</div>
<div style="position:absolute;left:907px;top:255px;white-space:nowrap;font-size:12px;line-height:14px;">louisiana</div>
<svg style="position:absolute;left:1093px;top:254px;" width="14" height="14" viewBox="0 0 14 14"><rect x="0.5" y="0.5" width="13" height="13" rx="1.5" fill="#f2f2f2" stroke="#c8c8c8"/><path d="M0.3 10.5 H3 V3.8 H11 V10.5 H13.7" stroke="#5cb85c" stroke-width="1.2" fill="none"/></svg>
<svg style="position:absolute;left:1185px;top:251px;" width="20" height="20" viewBox="0 0 20 20"><rect x="0.5" y="0.5" width="19" height="19" rx="3" fill="#fff" stroke="#555" stroke-width="1.1"/><rect x="3.5" y="7.5" width="4.5" height="5" fill="#f0f0f0" stroke="#c0c0c0" stroke-width="0.9"/><path d="M10.5 5 H8.8 V15 H10.5 M8 10 H10.5" stroke="#3d8fd6" fill="none" stroke-width="0.9"/><rect x="10" y="3.3" width="7" height="3.4" rx="1.5" fill="#f4f4f4" stroke="#c0c0c0" stroke-width="0.9"/><rect x="10" y="8.3" width="7" height="3.4" rx="1.5" fill="#f4f4f4" stroke="#c0c0c0" stroke-width="0.9"/><rect x="10" y="13.3" width="7" height="3.4" rx="1.5" fill="#f4f4f4" stroke="#c0c0c0" stroke-width="0.9"/></svg>
<div style="position:absolute;left:1251px;top:255px;white-space:nowrap;font-size:12px;line-height:14px;">Negligible</div>
<div style="position:absolute;left:1336px;top:255px;white-space:nowrap;font-size:12px;line-height:14px;">Neglig</div>
<div style="position:absolute;left:0px;top:273px;width:15px;height:23px;background:#eff0f3"></div>
<div style="position:absolute;left:15px;top:273px;width:1354px;height:22px;background:#fff"></div>
<div style="position:absolute;left:0px;top:295px;width:1370px;height:1px;background:#d8dbe1"></div>
<div style="position:absolute;left:15px;top:273px;width:1px;height:23px;background:#d8dbe1"></div>
<div style="position:absolute;left:67px;top:273px;width:1px;height:23px;background:#d8dbe1"></div>
<div style="position:absolute;left:165px;top:273px;width:1px;height:23px;background:#d8dbe1"></div>
<div style="position:absolute;left:195px;top:273px;width:1px;height:23px;background:#d8dbe1"></div>
<div style="position:absolute;left:229px;top:273px;width:1px;height:23px;background:#d8dbe1"></div>
<div style="position:absolute;left:902px;top:273px;width:1px;height:23px;background:#d8dbe1"></div>
<div style="position:absolute;left:1059px;top:273px;width:1px;height:23px;background:#d8dbe1"></div>
<div style="position:absolute;left:1142px;top:273px;width:1px;height:23px;background:#d8dbe1"></div>
<div style="position:absolute;left:1246px;top:273px;width:1px;height:23px;background:#d8dbe1"></div>
<div style="position:absolute;left:1331px;top:273px;width:1px;height:23px;background:#d8dbe1"></div>
<svg style="position:absolute;left:34px;top:277px;" width="14" height="14" viewBox="0 0 14 14"><defs><linearGradient id="cg" x1="0" y1="0" x2="1" y2="1"><stop offset="0" stop-color="#d4d7dc"/><stop offset="1" stop-color="#fbfbfb"/></linearGradient></defs><rect x="0.5" y="0.5" width="13" height="13" fill="#fff" stroke="#7d7d7d"/><rect x="2" y="2" width="10" height="10" fill="url(#cg)"/><path d="M3.4 6.6 L5.9 10.6 L10.6 2.4" stroke="#3a3a3a" stroke-width="1.8" fill="none"/></svg>
<svg style="position:absolute;left:110px;top:277px;" width="14" height="14" viewBox="0 0 14 14"><defs><linearGradient id="ug" x1="0" y1="0" x2="1" y2="1"><stop offset="0" stop-color="#d4d7dc"/><stop offset="1" stop-color="#fbfbfb"/></linearGradient></defs><rect x="0.5" y="0.5" width="13" height="13" fill="#fff" stroke="#7d7d7d"/><rect x="2" y="2" width="10" height="10" fill="url(#ug)"/></svg>
<div style="position:absolute;left:170px;top:278px;white-space:nowrap;font-size:12px;line-height:14px;">R15</div>
<svg style="position:absolute;left:201px;top:277px;" width="16" height="16" viewBox="0 0 16 16"><path d="M1.5 3 C1.5 1.5 2.5 1 4 1 H10.5 V8.5 C9 9.5 8 10.5 7 12 C6.3 13 6.5 14 5.8 14.5 C4.8 15 4 14 4.3 12.5 L5 10 H2.8 C1.8 10 1 9.3 1.2 8.2 Z" fill="#efb28a" stroke="#c27a4c" stroke-width="0.9"/><rect x="10.5" y="1" width="4" height="7" fill="#e04a4a"/></svg>
<svg style="position:absolute;left:231px;top:277px;" width="15" height="15" viewBox="0 0 15 15"><path d="M3.3 0.0 C3.56 2.18 4.42 3.04 6.60 3.30 C4.42 3.56 3.56 4.42 3.30 6.60 C3.04 4.42 2.18 3.56 0.00 3.30 C2.18 3.04 3.04 2.18 3.30 0.00Z" fill="#8a2fc8"/><path d="M8.8 3.0999999999999996 C9.27 6.99 10.81 8.53 14.70 9.00 C10.81 9.47 9.27 11.01 8.80 14.90 C8.33 11.01 6.79 9.47 2.90 9.00 C6.79 8.53 8.33 6.99 8.80 3.10Z" fill="#8a2fc8"/></svg>
<div style="position:absolute;left:254px;top:278px;white-space:nowrap;font-size:12px;line-height:14px;">Potential delays due to transportation infrastructure limitations in Mississippi</div>
<div style="position:absolute;left:907px;top:278px;white-space:nowrap;font-size:12px;line-height:14px;">mississippi</div>
<svg style="position:absolute;left:1093px;top:277px;" width="14" height="14" viewBox="0 0 14 14"><rect x="0.5" y="0.5" width="13" height="13" rx="1.5" fill="#f2f2f2" stroke="#c8c8c8"/><path d="M0.3 10.5 H3 V3.8 H11 V10.5 H13.7" stroke="#5cb85c" stroke-width="1.2" fill="none"/></svg>
<svg style="position:absolute;left:1185px;top:274px;" width="20" height="20" viewBox="0 0 20 20"><rect x="0.5" y="0.5" width="19" height="19" rx="3" fill="#fff" stroke="#555" stroke-width="1.1"/><rect x="3.5" y="7.5" width="4.5" height="5" fill="#f0f0f0" stroke="#c0c0c0" stroke-width="0.9"/><path d="M10.5 5 H8.8 V15 H10.5 M8 10 H10.5" stroke="#3d8fd6" fill="none" stroke-width="0.9"/><rect x="10" y="3.3" width="7" height="3.4" rx="1.5" fill="#f4f4f4" stroke="#c0c0c0" stroke-width="0.9"/><rect x="10" y="8.3" width="7" height="3.4" rx="1.5" fill="#f4f4f4" stroke="#c0c0c0" stroke-width="0.9"/><rect x="10" y="13.3" width="7" height="3.4" rx="1.5" fill="#f4f4f4" stroke="#c0c0c0" stroke-width="0.9"/></svg>
<div style="position:absolute;left:1251px;top:278px;white-space:nowrap;font-size:12px;line-height:14px;">Negligible</div>
<div style="position:absolute;left:1336px;top:278px;white-space:nowrap;font-size:12px;line-height:14px;">Neglig</div>
<div style="position:absolute;left:0px;top:296px;width:15px;height:23px;background:#eff0f3"></div>
<div style="position:absolute;left:15px;top:296px;width:1354px;height:22px;background:#fff"></div>
<div style="position:absolute;left:0px;top:318px;width:1370px;height:1px;background:#d8dbe1"></div>
<div style="position:absolute;left:15px;top:296px;width:1px;height:23px;background:#d8dbe1"></div>
<div style="position:absolute;left:67px;top:296px;width:1px;height:23px;background:#d8dbe1"></div>
<div style="position:absolute;left:165px;top:296px;width:1px;height:23px;background:#d8dbe1"></div>
<div style="position:absolute;left:195px;top:296px;width:1px;height:23px;background:#d8dbe1"></div>
<div style="position:absolute;left:229px;top:296px;width:1px;height:23px;background:#d8dbe1"></div>
<div style="position:absolute;left:902px;top:296px;width:1px;height:23px;background:#d8dbe1"></div>
<div style="position:absolute;left:1059px;top:296px;width:1px;height:23px;background:#d8dbe1"></div>
<div style="position:absolute;left:1142px;top:296px;width:1px;height:23px;background:#d8dbe1"></div>
<div style="position:absolute;left:1246px;top:296px;width:1px;height:23px;background:#d8dbe1"></div>
<div style="position:absolute;left:1331px;top:296px;width:1px;height:23px;background:#d8dbe1"></div>
<svg style="position:absolute;left:34px;top:300px;" width="14" height="14" viewBox="0 0 14 14"><defs><linearGradient id="cg" x1="0" y1="0" x2="1" y2="1"><stop offset="0" stop-color="#d4d7dc"/><stop offset="1" stop-color="#fbfbfb"/></linearGradient></defs><rect x="0.5" y="0.5" width="13" height="13" fill="#fff" stroke="#7d7d7d"/><rect x="2" y="2" width="10" height="10" fill="url(#cg)"/><path d="M3.4 6.6 L5.9 10.6 L10.6 2.4" stroke="#3a3a3a" stroke-width="1.8" fill="none"/></svg>
<svg style="position:absolute;left:110px;top:300px;" width="14" height="14" viewBox="0 0 14 14"><rect x="0.5" y="0.5" width="13" height="13" fill="#fff" stroke="#e0e0e0"/><rect x="2" y="2" width="10" height="10" fill="#f6f6f6"/></svg>
<div style="position:absolute;left:170px;top:301px;white-space:nowrap;font-size:12px;line-height:14px;">R16</div>
<svg style="position:absolute;left:202px;top:301px;" width="13" height="13" viewBox="0 0 13 13"><rect x="0.5" y="0.5" width="12" height="11" rx="1" fill="#fff" stroke="#d0d0d0"/><rect x="1" y="1" width="11" height="2.5" fill="#cfcfcf"/><rect x="4" y="5" width="5" height="4" fill="#3b8ad6"/></svg>
<svg style="position:absolute;left:231px;top:300px;" width="15" height="15" viewBox="0 0 15 15"><path d="M3.3 0.0 C3.56 2.18 4.42 3.04 6.60 3.30 C4.42 3.56 3.56 4.42 3.30 6.60 C3.04 4.42 2.18 3.56 0.00 3.30 C2.18 3.04 3.04 2.18 3.30 0.00Z" fill="#8a2fc8"/><path d="M8.8 3.0999999999999996 C9.27 6.99 10.81 8.53 14.70 9.00 C10.81 9.47 9.27 11.01 8.80 14.90 C8.33 11.01 6.79 9.47 2.90 9.00 C6.79 8.53 8.33 6.99 8.80 3.10Z" fill="#8a2fc8"/></svg>
<div style="position:absolute;left:254px;top:301px;white-space:nowrap;font-size:12px;line-height:14px;">Calendar window of increased shipping demand during holiday seasons affecting component delivery</div>
<div style="position:absolute;left:907px;top:301px;white-space:nowrap;font-size:12px;line-height:14px;">california,mississippi</div>
<svg style="position:absolute;left:1093px;top:300px;" width="14" height="14" viewBox="0 0 14 14"><rect x="0.5" y="0.5" width="13" height="13" rx="1.5" fill="#f2f2f2" stroke="#c8c8c8"/><path d="M0.3 10.5 H3 V3.8 H11 V10.5 H13.7" stroke="#5cb85c" stroke-width="1.2" fill="none"/></svg>
<svg style="position:absolute;left:1185px;top:297px;" width="20" height="20" viewBox="0 0 20 20"><rect x="0.5" y="0.5" width="19" height="19" rx="3" fill="#fff" stroke="#555" stroke-width="1.1"/><rect x="3.5" y="7.5" width="4.5" height="5" fill="#f0f0f0" stroke="#c0c0c0" stroke-width="0.9"/><path d="M10.5 5 H8.8 V15 H10.5 M8 10 H10.5" stroke="#3d8fd6" fill="none" stroke-width="0.9"/><rect x="10" y="3.3" width="7" height="3.4" rx="1.5" fill="#f4f4f4" stroke="#c0c0c0" stroke-width="0.9"/><rect x="10" y="8.3" width="7" height="3.4" rx="1.5" fill="#f4f4f4" stroke="#c0c0c0" stroke-width="0.9"/><rect x="10" y="13.3" width="7" height="3.4" rx="1.5" fill="#f4f4f4" stroke="#c0c0c0" stroke-width="0.9"/></svg>
<div style="position:absolute;left:1251px;top:301px;white-space:nowrap;font-size:12px;line-height:14px;color:#c4c4c4">Negligible</div>
<div style="position:absolute;left:1336px;top:301px;white-space:nowrap;font-size:12px;line-height:14px;color:#c4c4c4">Neglig</div>
</div>
<div style="position:absolute;left:1406px;top:290px;width:16px;height:312px;background:#f0f0f0"></div>
<svg style="position:absolute;left:1409px;top:295px;" width="9" height="6" viewBox="0 0 9 6"><path d="M0.5 5.5 L4.5 0.5 L8.5 5.5 Z" fill="#5e6470"/></svg>
<svg style="position:absolute;left:1409px;top:590px;" width="9" height="6" viewBox="0 0 9 6"><path d="M0.5 0.5 L4.5 5.5 L8.5 0.5 Z" fill="#5e6470"/></svg>
<div style="position:absolute;left:1407px;top:343px;width:14px;height:223px;background:linear-gradient(90deg,#f4f4f4,#dcdcdc);border:1px solid #a8a8a8;border-radius:3px"></div>
<svg style="position:absolute;left:1410px;top:449px;" width="8" height="7" viewBox="0 0 8 7"><path d="M0 0.5H8M0 3H8M0 5.5H8" stroke="#888" stroke-width="0.9"/></svg>
<div style="position:absolute;left:36px;top:602px;width:1370px;height:17px;background:#f0f0f0"></div>
<div style="position:absolute;left:36px;top:602px;width:16px;height:17px;background:#eff0f3;border-right:1px solid #d8dbe1"></div>
<svg style="position:absolute;left:57px;top:606px;" width="7" height="9" viewBox="0 0 7 9"><path d="M6 0.5 L0.5 4.5 L6 8.5 Z" fill="#5e6470"/></svg>
<svg style="position:absolute;left:1393px;top:606px;" width="7" height="9" viewBox="0 0 7 9"><path d="M0.5 0.5 L6 4.5 L0.5 8.5 Z" fill="#5e6470"/></svg>
<div style="position:absolute;left:69px;top:603px;width:693px;height:15px;background:linear-gradient(#f8f8f8,#dcdcdc);border:1px solid #a8a8a8;border-radius:3px"></div>
<svg style="position:absolute;left:411px;top:605px;" width="9" height="9" viewBox="0 0 9 9"><path d="M0.5 0.5V8.5M2.5 0.5V8.5M4.5 0.5V8.5M6.5 0.5V8.5" stroke="#8a8a8a" stroke-width="0.8"/></svg>
<div style="position:absolute;left:1406px;top:602px;width:16px;height:17px;background:#f0f0f0"></div>
<div style="position:absolute;left:723px;top:622px;width:2px;height:2px;background:#8a8f98"></div>
<div style="position:absolute;left:727px;top:622px;width:2px;height:2px;background:#8a8f98"></div>
<div style="position:absolute;left:731px;top:622px;width:2px;height:2px;background:#8a8f98"></div>
<div style="position:absolute;left:735px;top:622px;width:2px;height:2px;background:#8a8f98"></div>
<div style="position:absolute;left:40px;top:625px;width:1383px;height:292px;background:#eeeff3;border:1px solid #c5cad3;border-radius:4px 4px 0 0"></div>
<div style="position:absolute;left:41px;top:626px;width:1381px;height:22px;background:#dde1e8;border-radius:3px 3px 0 0"></div>
<div style="position:absolute;left:52px;top:631px;white-space:nowrap;font-size:12px;line-height:14px;color:#222">Port congestion delays in California affecting shipment schedules</div>
<svg style="position:absolute;left:1396px;top:632px;" width="11" height="11" viewBox="0 0 11 11"><path d="M1 1 L5.5 5 L10 1 M1 5.5 L5.5 9.5 L10 5.5" stroke="#8a93a3" stroke-width="1.2" fill="none"/></svg>
<div style="position:absolute;left:46px;top:679px;width:1370px;height:231px;background:#fff;border:1px solid #8b929c"></div>
<div style="position:absolute;left:50px;top:658px;width:55px;height:21px;background:linear-gradient(#f6f7f9 0%,#eceef1 45%,#dde1e7 70%,#e8eaee 100%);border:1px solid #9aa1ab;border-bottom:none"></div>
<div style="position:absolute;left:104px;top:658px;width:72px;height:21px;background:linear-gradient(#f6f7f9 0%,#eceef1 45%,#dde1e7 70%,#e8eaee 100%);border:1px solid #9aa1ab;border-bottom:none"></div>
<div style="position:absolute;left:175px;top:655px;width:105px;height:25px;background:#fff;border:1px solid #8b929c;border-bottom:none"></div>
<div style="position:absolute;left:59px;top:662px;white-space:nowrap;font-size:12px;line-height:14px;color:#222">Details</div>
<div style="position:absolute;left:113px;top:662px;white-space:nowrap;font-size:12px;line-height:14px;color:#222">Mappings</div>
<div style="position:absolute;left:184px;top:662px;white-space:nowrap;font-size:12px;line-height:14px;color:#222">Mitigation Steps</div>
<div style="position:absolute;left:59px;top:692px;width:1008px;height:172px;background:#fff;border:1px solid #737a86"></div>
<div style="position:absolute;left:60px;top:693px;width:1006px;height:22px;background:linear-gradient(#f9fafa 0%,#eef0f2 40%,#dcdfe3 100%)"></div>
<div style="position:absolute;left:60px;top:715px;width:1006px;height:1px;background:#737a86"></div>
<div style="position:absolute;left:75px;top:696px;width:1px;height:16px;background:#9ea6b2"></div>
<div style="position:absolute;left:130px;top:696px;width:1px;height:16px;background:#9ea6b2"></div>
<div style="position:absolute;left:185px;top:696px;width:1px;height:16px;background:#9ea6b2"></div>
<div style="position:absolute;left:716px;top:696px;width:1px;height:16px;background:#9ea6b2"></div>
<div style="position:absolute;left:801px;top:696px;width:1px;height:16px;background:#9ea6b2"></div>
<div style="position:absolute;left:886px;top:696px;width:1px;height:16px;background:#9ea6b2"></div>
<div style="position:absolute;left:971px;top:696px;width:1px;height:16px;background:#9ea6b2"></div>
<div style="position:absolute;left:1049px;top:696px;width:1px;height:16px;background:#9ea6b2"></div>
<div style="position:absolute;left:80px;top:698px;white-space:nowrap;font-size:12px;line-height:14px;color:#111">Enabled</div>
<div style="position:absolute;left:135px;top:698px;white-space:nowrap;font-size:12px;line-height:14px;color:#111">Step</div>
<div style="position:absolute;left:190px;top:698px;white-space:nowrap;font-size:12px;line-height:14px;color:#111">Description</div>
<div style="position:absolute;left:721px;top:698px;white-space:nowrap;font-size:12px;line-height:14px;color:#111">Duration</div>
<div style="position:absolute;left:806px;top:698px;white-space:nowrap;font-size:12px;line-height:14px;color:#111">Cost</div>
<div style="position:absolute;left:891px;top:698px;white-space:nowrap;font-size:12px;line-height:14px;color:#111">Probability</div>
<div style="position:absolute;left:976px;top:698px;white-space:nowrap;font-size:12px;line-height:14px;color:#111">Schedule</div>
<div style="position:absolute;left:60px;top:716px;width:15px;height:21px;background:#eff0f3"></div>
<div style="position:absolute;left:60px;top:736px;width:990px;height:1px;background:#d8dbe1"></div>
<div style="position:absolute;left:75px;top:716px;width:1px;height:21px;background:#d8dbe1"></div>
<div style="position:absolute;left:130px;top:716px;width:1px;height:21px;background:#d8dbe1"></div>
<div style="position:absolute;left:185px;top:716px;width:1px;height:21px;background:#d8dbe1"></div>
<div style="position:absolute;left:716px;top:716px;width:1px;height:21px;background:#d8dbe1"></div>
<div style="position:absolute;left:801px;top:716px;width:1px;height:21px;background:#d8dbe1"></div>
<div style="position:absolute;left:886px;top:716px;width:1px;height:21px;background:#d8dbe1"></div>
<div style="position:absolute;left:971px;top:716px;width:1px;height:21px;background:#d8dbe1"></div>
<svg style="position:absolute;left:96px;top:719px;" width="14" height="14" viewBox="0 0 14 14"><defs><linearGradient id="cg" x1="0" y1="0" x2="1" y2="1"><stop offset="0" stop-color="#d4d7dc"/><stop offset="1" stop-color="#fbfbfb"/></linearGradient></defs><rect x="0.5" y="0.5" width="13" height="13" fill="#fff" stroke="#7d7d7d"/><rect x="2" y="2" width="10" height="10" fill="url(#cg)"/><path d="M3.4 6.6 L5.9 10.6 L10.6 2.4" stroke="#3a3a3a" stroke-width="1.8" fill="none"/></svg>
<div style="position:absolute;left:131px;top:720px;width:49px;text-align:right;line-height:14px">1</div>
<svg style="position:absolute;left:187px;top:719px;" width="15" height="15" viewBox="0 0 15 15"><path d="M3.3 0.0 C3.56 2.18 4.42 3.04 6.60 3.30 C4.42 3.56 3.56 4.42 3.30 6.60 C3.04 4.42 2.18 3.56 0.00 3.30 C2.18 3.04 3.04 2.18 3.30 0.00Z" fill="#8a2fc8"/><path d="M8.8 3.0999999999999996 C9.27 6.99 10.81 8.53 14.70 9.00 C10.81 9.47 9.27 11.01 8.80 14.90 C8.33 11.01 6.79 9.47 2.90 9.00 C6.79 8.53 8.33 6.99 8.80 3.10Z" fill="#8a2fc8"/></svg>
<div style="position:absolute;left:210px;top:720px;white-space:nowrap;font-size:12px;line-height:14px;">Develop alternative shipping routes and ports for component transport.</div>
<div style="position:absolute;left:717px;top:720px;width:79px;text-align:right;line-height:14px">0d</div>
<div style="position:absolute;left:802px;top:720px;width:79px;text-align:right;line-height:14px">$0</div>
<div style="position:absolute;left:891px;top:720px;white-space:nowrap;font-size:12px;line-height:14px;">Negligible</div>
<div style="position:absolute;left:976px;top:720px;white-space:nowrap;font-size:12px;line-height:14px;">Negligible</div>
<div style="position:absolute;left:60px;top:737px;width:15px;height:21px;background:#eff0f3"></div>
<div style="position:absolute;left:60px;top:757px;width:990px;height:1px;background:#d8dbe1"></div>
<div style="position:absolute;left:75px;top:737px;width:1px;height:21px;background:#d8dbe1"></div>
<div style="position:absolute;left:130px;top:737px;width:1px;height:21px;background:#d8dbe1"></div>
<div style="position:absolute;left:185px;top:737px;width:1px;height:21px;background:#d8dbe1"></div>
<div style="position:absolute;left:716px;top:737px;width:1px;height:21px;background:#d8dbe1"></div>
<div style="position:absolute;left:801px;top:737px;width:1px;height:21px;background:#d8dbe1"></div>
<div style="position:absolute;left:886px;top:737px;width:1px;height:21px;background:#d8dbe1"></div>
<div style="position:absolute;left:971px;top:737px;width:1px;height:21px;background:#d8dbe1"></div>
<svg style="position:absolute;left:96px;top:740px;" width="14" height="14" viewBox="0 0 14 14"><defs><linearGradient id="cg" x1="0" y1="0" x2="1" y2="1"><stop offset="0" stop-color="#d4d7dc"/><stop offset="1" stop-color="#fbfbfb"/></linearGradient></defs><rect x="0.5" y="0.5" width="13" height="13" fill="#fff" stroke="#7d7d7d"/><rect x="2" y="2" width="10" height="10" fill="url(#cg)"/><path d="M3.4 6.6 L5.9 10.6 L10.6 2.4" stroke="#3a3a3a" stroke-width="1.8" fill="none"/></svg>
<div style="position:absolute;left:131px;top:741px;width:49px;text-align:right;line-height:14px">2</div>
<svg style="position:absolute;left:187px;top:740px;" width="15" height="15" viewBox="0 0 15 15"><path d="M3.3 0.0 C3.56 2.18 4.42 3.04 6.60 3.30 C4.42 3.56 3.56 4.42 3.30 6.60 C3.04 4.42 2.18 3.56 0.00 3.30 C2.18 3.04 3.04 2.18 3.30 0.00Z" fill="#8a2fc8"/><path d="M8.8 3.0999999999999996 C9.27 6.99 10.81 8.53 14.70 9.00 C10.81 9.47 9.27 11.01 8.80 14.90 C8.33 11.01 6.79 9.47 2.90 9.00 C6.79 8.53 8.33 6.99 8.80 3.10Z" fill="#8a2fc8"/></svg>
<div style="position:absolute;left:210px;top:741px;white-space:nowrap;font-size:12px;line-height:14px;">Increase inventory buffer of critical components in Mississippi assembly location.</div>
<div style="position:absolute;left:717px;top:741px;width:79px;text-align:right;line-height:14px">0d</div>
<div style="position:absolute;left:802px;top:741px;width:79px;text-align:right;line-height:14px">$0</div>
<div style="position:absolute;left:891px;top:741px;white-space:nowrap;font-size:12px;line-height:14px;">Negligible</div>
<div style="position:absolute;left:976px;top:741px;white-space:nowrap;font-size:12px;line-height:14px;">Negligible</div>
<div style="position:absolute;left:60px;top:758px;width:15px;height:21px;background:#eff0f3"></div>
<div style="position:absolute;left:60px;top:778px;width:990px;height:1px;background:#d8dbe1"></div>
<div style="position:absolute;left:75px;top:758px;width:1px;height:21px;background:#d8dbe1"></div>
<div style="position:absolute;left:130px;top:758px;width:1px;height:21px;background:#d8dbe1"></div>
<div style="position:absolute;left:185px;top:758px;width:1px;height:21px;background:#d8dbe1"></div>
<div style="position:absolute;left:716px;top:758px;width:1px;height:21px;background:#d8dbe1"></div>
<div style="position:absolute;left:801px;top:758px;width:1px;height:21px;background:#d8dbe1"></div>
<div style="position:absolute;left:886px;top:758px;width:1px;height:21px;background:#d8dbe1"></div>
<div style="position:absolute;left:971px;top:758px;width:1px;height:21px;background:#d8dbe1"></div>
<svg style="position:absolute;left:96px;top:761px;" width="14" height="14" viewBox="0 0 14 14"><defs><linearGradient id="cg" x1="0" y1="0" x2="1" y2="1"><stop offset="0" stop-color="#d4d7dc"/><stop offset="1" stop-color="#fbfbfb"/></linearGradient></defs><rect x="0.5" y="0.5" width="13" height="13" fill="#fff" stroke="#7d7d7d"/><rect x="2" y="2" width="10" height="10" fill="url(#cg)"/><path d="M3.4 6.6 L5.9 10.6 L10.6 2.4" stroke="#3a3a3a" stroke-width="1.8" fill="none"/></svg>
<div style="position:absolute;left:131px;top:762px;width:49px;text-align:right;line-height:14px">3</div>
<svg style="position:absolute;left:187px;top:761px;" width="15" height="15" viewBox="0 0 15 15"><path d="M3.3 0.0 C3.56 2.18 4.42 3.04 6.60 3.30 C4.42 3.56 3.56 4.42 3.30 6.60 C3.04 4.42 2.18 3.56 0.00 3.30 C2.18 3.04 3.04 2.18 3.30 0.00Z" fill="#8a2fc8"/><path d="M8.8 3.0999999999999996 C9.27 6.99 10.81 8.53 14.70 9.00 C10.81 9.47 9.27 11.01 8.80 14.90 C8.33 11.01 6.79 9.47 2.90 9.00 C6.79 8.53 8.33 6.99 8.80 3.10Z" fill="#8a2fc8"/></svg>
<div style="position:absolute;left:210px;top:762px;white-space:nowrap;font-size:12px;line-height:14px;">Coordinate closely with port authorities and shipping companies to monitor congestion levels.</div>
<div style="position:absolute;left:717px;top:762px;width:79px;text-align:right;line-height:14px">0d</div>
<div style="position:absolute;left:802px;top:762px;width:79px;text-align:right;line-height:14px">$0</div>
<div style="position:absolute;left:891px;top:762px;white-space:nowrap;font-size:12px;line-height:14px;">Negligible</div>
<div style="position:absolute;left:976px;top:762px;white-space:nowrap;font-size:12px;line-height:14px;">Negligible</div>
<div style="position:absolute;left:60px;top:779px;width:15px;height:21px;background:#eff0f3"></div>
<div style="position:absolute;left:60px;top:799px;width:990px;height:1px;background:#d8dbe1"></div>
<div style="position:absolute;left:75px;top:779px;width:1px;height:21px;background:#d8dbe1"></div>
<div style="position:absolute;left:130px;top:779px;width:1px;height:21px;background:#d8dbe1"></div>
<div style="position:absolute;left:185px;top:779px;width:1px;height:21px;background:#d8dbe1"></div>
<div style="position:absolute;left:716px;top:779px;width:1px;height:21px;background:#d8dbe1"></div>
<div style="position:absolute;left:801px;top:779px;width:1px;height:21px;background:#d8dbe1"></div>
<div style="position:absolute;left:886px;top:779px;width:1px;height:21px;background:#d8dbe1"></div>
<div style="position:absolute;left:971px;top:779px;width:1px;height:21px;background:#d8dbe1"></div>
<svg style="position:absolute;left:96px;top:782px;" width="14" height="14" viewBox="0 0 14 14"><defs><linearGradient id="cg" x1="0" y1="0" x2="1" y2="1"><stop offset="0" stop-color="#d4d7dc"/><stop offset="1" stop-color="#fbfbfb"/></linearGradient></defs><rect x="0.5" y="0.5" width="13" height="13" fill="#fff" stroke="#7d7d7d"/><rect x="2" y="2" width="10" height="10" fill="url(#cg)"/><path d="M3.4 6.6 L5.9 10.6 L10.6 2.4" stroke="#3a3a3a" stroke-width="1.8" fill="none"/></svg>
<div style="position:absolute;left:131px;top:783px;width:49px;text-align:right;line-height:14px">4</div>
<svg style="position:absolute;left:187px;top:782px;" width="15" height="15" viewBox="0 0 15 15"><path d="M3.3 0.0 C3.56 2.18 4.42 3.04 6.60 3.30 C4.42 3.56 3.56 4.42 3.30 6.60 C3.04 4.42 2.18 3.56 0.00 3.30 C2.18 3.04 3.04 2.18 3.30 0.00Z" fill="#8a2fc8"/><path d="M8.8 3.0999999999999996 C9.27 6.99 10.81 8.53 14.70 9.00 C10.81 9.47 9.27 11.01 8.80 14.90 C8.33 11.01 6.79 9.47 2.90 9.00 C6.79 8.53 8.33 6.99 8.80 3.10Z" fill="#8a2fc8"/></svg>
<div style="position:absolute;left:210px;top:783px;white-space:nowrap;font-size:12px;line-height:14px;">Implement flexible project scheduling to accommodate potential shipment delays.</div>
<div style="position:absolute;left:717px;top:783px;width:79px;text-align:right;line-height:14px">0d</div>
<div style="position:absolute;left:802px;top:783px;width:79px;text-align:right;line-height:14px">$0</div>
<div style="position:absolute;left:891px;top:783px;white-space:nowrap;font-size:12px;line-height:14px;">Negligible</div>
<div style="position:absolute;left:976px;top:783px;white-space:nowrap;font-size:12px;line-height:14px;">Negligible</div>
<div style="position:absolute;left:60px;top:800px;width:15px;height:21px;background:#eff0f3"></div>
<div style="position:absolute;left:60px;top:820px;width:990px;height:1px;background:#d8dbe1"></div>
<div style="position:absolute;left:75px;top:800px;width:1px;height:21px;background:#d8dbe1"></div>
<div style="position:absolute;left:130px;top:800px;width:1px;height:21px;background:#d8dbe1"></div>
<div style="position:absolute;left:185px;top:800px;width:1px;height:21px;background:#d8dbe1"></div>
<div style="position:absolute;left:716px;top:800px;width:1px;height:21px;background:#d8dbe1"></div>
<div style="position:absolute;left:801px;top:800px;width:1px;height:21px;background:#d8dbe1"></div>
<div style="position:absolute;left:886px;top:800px;width:1px;height:21px;background:#d8dbe1"></div>
<div style="position:absolute;left:971px;top:800px;width:1px;height:21px;background:#d8dbe1"></div>
<svg style="position:absolute;left:96px;top:803px;" width="14" height="14" viewBox="0 0 14 14"><defs><linearGradient id="cg" x1="0" y1="0" x2="1" y2="1"><stop offset="0" stop-color="#d4d7dc"/><stop offset="1" stop-color="#fbfbfb"/></linearGradient></defs><rect x="0.5" y="0.5" width="13" height="13" fill="#fff" stroke="#7d7d7d"/><rect x="2" y="2" width="10" height="10" fill="url(#cg)"/><path d="M3.4 6.6 L5.9 10.6 L10.6 2.4" stroke="#3a3a3a" stroke-width="1.8" fill="none"/></svg>
<div style="position:absolute;left:131px;top:804px;width:49px;text-align:right;line-height:14px">5</div>
<svg style="position:absolute;left:187px;top:803px;" width="15" height="15" viewBox="0 0 15 15"><path d="M3.3 0.0 C3.56 2.18 4.42 3.04 6.60 3.30 C4.42 3.56 3.56 4.42 3.30 6.60 C3.04 4.42 2.18 3.56 0.00 3.30 C2.18 3.04 3.04 2.18 3.30 0.00Z" fill="#8a2fc8"/><path d="M8.8 3.0999999999999996 C9.27 6.99 10.81 8.53 14.70 9.00 C10.81 9.47 9.27 11.01 8.80 14.90 C8.33 11.01 6.79 9.47 2.90 9.00 C6.79 8.53 8.33 6.99 8.80 3.10Z" fill="#8a2fc8"/></svg>
<div style="position:absolute;left:210px;top:804px;white-space:nowrap;font-size:12px;line-height:14px;">Explore use of expedited shipping methods for critical components.</div>
<div style="position:absolute;left:717px;top:804px;width:79px;text-align:right;line-height:14px">0d</div>
<div style="position:absolute;left:802px;top:804px;width:79px;text-align:right;line-height:14px">$0</div>
<div style="position:absolute;left:891px;top:804px;white-space:nowrap;font-size:12px;line-height:14px;">Negligible</div>
<div style="position:absolute;left:976px;top:804px;white-space:nowrap;font-size:12px;line-height:14px;">Negligible</div>
<div style="position:absolute;left:60px;top:821px;width:15px;height:21px;background:#eff0f3"></div>
<div style="position:absolute;left:60px;top:841px;width:990px;height:1px;background:#d8dbe1"></div>
<div style="position:absolute;left:75px;top:821px;width:1px;height:21px;background:#d8dbe1"></div>
<div style="position:absolute;left:130px;top:821px;width:1px;height:21px;background:#d8dbe1"></div>
<div style="position:absolute;left:185px;top:821px;width:1px;height:21px;background:#d8dbe1"></div>
<div style="position:absolute;left:716px;top:821px;width:1px;height:21px;background:#d8dbe1"></div>
<div style="position:absolute;left:801px;top:821px;width:1px;height:21px;background:#d8dbe1"></div>
<div style="position:absolute;left:886px;top:821px;width:1px;height:21px;background:#d8dbe1"></div>
<div style="position:absolute;left:971px;top:821px;width:1px;height:21px;background:#d8dbe1"></div>
<svg style="position:absolute;left:96px;top:824px;" width="14" height="14" viewBox="0 0 14 14"><defs><linearGradient id="cg" x1="0" y1="0" x2="1" y2="1"><stop offset="0" stop-color="#d4d7dc"/><stop offset="1" stop-color="#fbfbfb"/></linearGradient></defs><rect x="0.5" y="0.5" width="13" height="13" fill="#fff" stroke="#7d7d7d"/><rect x="2" y="2" width="10" height="10" fill="url(#cg)"/><path d="M3.4 6.6 L5.9 10.6 L10.6 2.4" stroke="#3a3a3a" stroke-width="1.8" fill="none"/></svg>
<div style="position:absolute;left:131px;top:825px;width:49px;text-align:right;line-height:14px">6</div>
<svg style="position:absolute;left:187px;top:824px;" width="15" height="15" viewBox="0 0 15 15"><path d="M3.3 0.0 C3.56 2.18 4.42 3.04 6.60 3.30 C4.42 3.56 3.56 4.42 3.30 6.60 C3.04 4.42 2.18 3.56 0.00 3.30 C2.18 3.04 3.04 2.18 3.30 0.00Z" fill="#8a2fc8"/><path d="M8.8 3.0999999999999996 C9.27 6.99 10.81 8.53 14.70 9.00 C10.81 9.47 9.27 11.01 8.80 14.90 C8.33 11.01 6.79 9.47 2.90 9.00 C6.79 8.53 8.33 6.99 8.80 3.10Z" fill="#8a2fc8"/></svg>
<div style="position:absolute;left:210px;top:825px;white-space:nowrap;font-size:12px;line-height:14px;">Engage with local government and industry groups to advocate for congestion relief measures.</div>
<div style="position:absolute;left:717px;top:825px;width:79px;text-align:right;line-height:14px">0d</div>
<div style="position:absolute;left:802px;top:825px;width:79px;text-align:right;line-height:14px">$0</div>
<div style="position:absolute;left:891px;top:825px;white-space:nowrap;font-size:12px;line-height:14px;">Negligible</div>
<div style="position:absolute;left:976px;top:825px;white-space:nowrap;font-size:12px;line-height:14px;">Negligible</div>
<div style="position:absolute;left:60px;top:842px;width:990px;height:4px;background:#fff"></div>
<div style="position:absolute;left:1050px;top:716px;width:16px;height:130px;background:#f0f0f0"></div>
<svg style="position:absolute;left:1053px;top:723px;" width="9" height="6" viewBox="0 0 9 6"><path d="M0.5 5.5 L4.5 0.5 L8.5 5.5 Z" fill="#d0d0d0"/></svg>
<svg style="position:absolute;left:1053px;top:834px;" width="9" height="6" viewBox="0 0 9 6"><path d="M0.5 0.5 L4.5 5.5 L8.5 0.5 Z" fill="#d0d0d0"/></svg>
<div style="position:absolute;left:60px;top:846px;width:1006px;height:17px;background:#f0f0f0"></div>
<div style="position:absolute;left:60px;top:846px;width:15px;height:17px;background:#eff0f3;border-right:1px solid #d8dbe1"></div>
<svg style="position:absolute;left:81px;top:850px;" width="7" height="9" viewBox="0 0 7 9"><path d="M6 0.5 L0.5 4.5 L6 8.5 Z" fill="#5e6470"/></svg>
<svg style="position:absolute;left:1037px;top:850px;" width="7" height="9" viewBox="0 0 7 9"><path d="M0.5 0.5 L6 4.5 L0.5 8.5 Z" fill="#5e6470"/></svg>
<div style="position:absolute;left:93px;top:847px;width:754px;height:15px;background:linear-gradient(#f8f8f8,#dcdcdc);border:1px solid #a8a8a8;border-radius:3px"></div>
<svg style="position:absolute;left:466px;top:849px;" width="9" height="9" viewBox="0 0 9 9"><path d="M0.5 0.5V8.5M2.5 0.5V8.5M4.5 0.5V8.5M6.5 0.5V8.5" stroke="#8a8a8a" stroke-width="0.8"/></svg>
<div style="position:absolute;left:1082px;top:694px;white-space:nowrap;font-size:12px;line-height:14px;color:#222">Mitigation Notes</div>
<div style="position:absolute;left:1082px;top:713px;width:321px;height:151px;background:#fff;border:1px solid #8b8b8b;border-color:#7a7a7a #b0b0b0 #c8c8c8 #8a8a8a;border-radius:2px"></div>
<div style="position:absolute;left:1148px;top:869px;width:114px;height:28px;background:linear-gradient(#f4f5f7 0%,#e9ebee 45%,#d6dae0 55%,#e4e7eb 100%);border:1px solid #7b818a;border-radius:2px 0 0 2px"></div>
<div style="position:absolute;left:1261px;top:869px;width:37px;height:28px;background:linear-gradient(#f4f5f7 0%,#e9ebee 45%,#d6dae0 55%,#e4e7eb 100%);border:1px solid #7b818a;border-radius:0 2px 2px 0"></div>
<div style="position:absolute;left:1153.0px;top:877px;width:110px;text-align:center;white-space:nowrap;font-size:12px;line-height:14px;color:#1a1a1a">Add Step</div>
<svg style="position:absolute;left:1275px;top:881px;" width="7" height="4" viewBox="0 0 7 4"><path d="M0 0 H7 L3.5 3.5 Z" fill="#666"/></svg>
<div style="position:absolute;left:1299px;top:869px;width:99px;height:28px;background:linear-gradient(#fbfbfc,#eef0f2);border:1px solid #d0d3d8;border-radius:2px"></div>
<div style="position:absolute;left:1293.0px;top:877px;width:110px;text-align:center;white-space:nowrap;font-size:12px;line-height:14px;color:#a0a0a0">Remove Step</div>
<div style="position:absolute;left:59px;top:877px;white-space:nowrap;font-size:12px;line-height:14px;color:#222">Change Order</div>
<div style="position:absolute;left:138px;top:874px;width:37px;height:18px;background:linear-gradient(#fafafa,#eeeeee);border:1px solid #d3d6da;border-radius:2px"></div>
<div style="position:absolute;left:175px;top:874px;width:36px;height:18px;background:linear-gradient(#fafafa,#eeeeee);border:1px solid #d3d6da;border-radius:2px"></div>
<svg style="position:absolute;left:152px;top:880px;" width="8" height="5" viewBox="0 0 8 5"><path d="M0 4.5 L4 0.5 L8 4.5 Z" fill="#b8b8b8"/></svg>
<svg style="position:absolute;left:188px;top:880px;" width="8" height="5" viewBox="0 0 8 5"><path d="M0 0.5 L4 4.5 L8 0.5 Z" fill="#b8b8b8"/></svg>
<div style="position:absolute;left:1px;top:919px;width:1424px;height:28px;background:#434d5e;border-radius:0 0 7px 7px"></div>
<div style="position:absolute;left:7px;top:927px;white-space:nowrap;font-size:11px;line-height:14px;color:#e2e5ea">Ready</div>
<div style="position:absolute;left:1268px;top:923px;width:2px;height:21px;background:#c0d8ec"></div>
<div style="position:absolute;left:1280px;top:927px;white-space:nowrap;font-size:11.5px;line-height:14px;color:#e2e5ea">V8.11.0 x64</div>
</body></html>
